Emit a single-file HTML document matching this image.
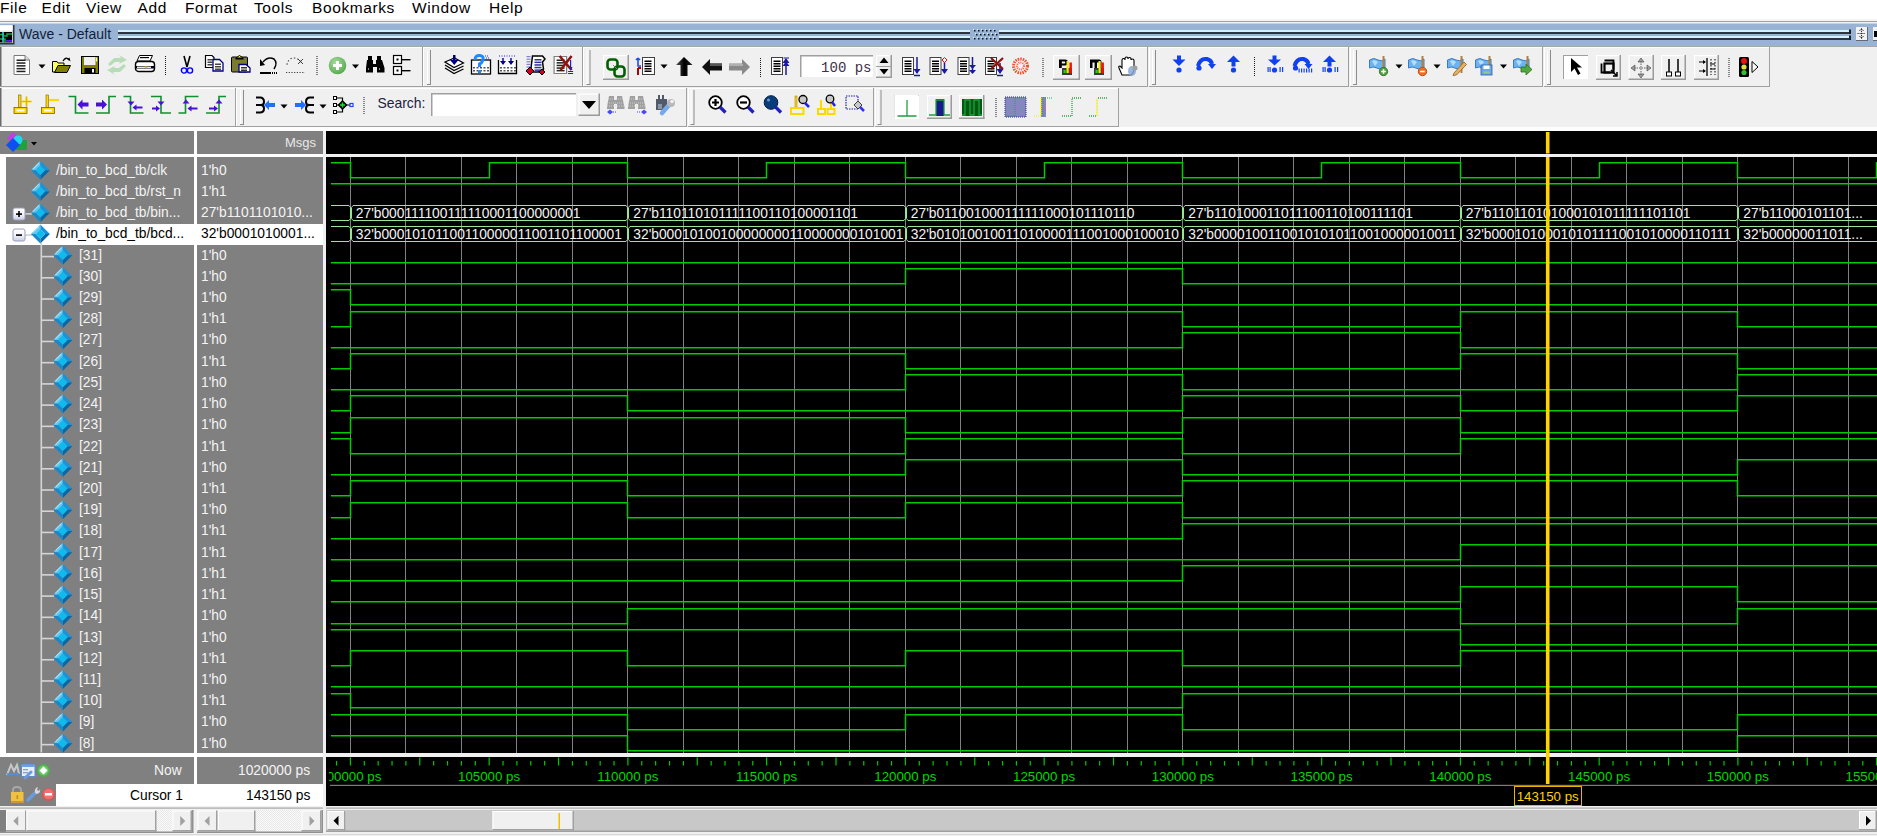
<!DOCTYPE html><html><head><meta charset="utf-8"><style>

*{margin:0;padding:0;box-sizing:border-box}
html,body{width:1877px;height:836px;overflow:hidden;background:#f0f0f0;font-family:"Liberation Sans",sans-serif}
.a{position:absolute}
.t{position:absolute;white-space:nowrap;line-height:1}

</style></head><body>
<div class="a" style="left:0;top:0;width:1877px;height:19px;background:#fff"></div>
<div class="a" style="left:0;top:19px;width:1877px;height:2px;background:#f4f4f4"></div>
<div class="a" style="left:0;top:21px;width:1877px;height:1px;background:#a0a0a0"></div>
<div class="a" style="left:0;top:22px;width:1877px;height:1px;background:#f0f0f0"></div>
<div class="t" style="left:0px;top:0px;font-size:15.5px;letter-spacing:0.6px;color:#000">File</div>
<div class="t" style="left:41.6px;top:0px;font-size:15.5px;letter-spacing:0.6px;color:#000">Edit</div>
<div class="t" style="left:86px;top:0px;font-size:15.5px;letter-spacing:0.6px;color:#000">View</div>
<div class="t" style="left:137.5px;top:0px;font-size:15.5px;letter-spacing:0.6px;color:#000">Add</div>
<div class="t" style="left:185px;top:0px;font-size:15.5px;letter-spacing:0.6px;color:#000">Format</div>
<div class="t" style="left:254px;top:0px;font-size:15.5px;letter-spacing:0.6px;color:#000">Tools</div>
<div class="t" style="left:312px;top:0px;font-size:15.5px;letter-spacing:0.6px;color:#000">Bookmarks</div>
<div class="t" style="left:412px;top:0px;font-size:15.5px;letter-spacing:0.6px;color:#000">Window</div>
<div class="t" style="left:489px;top:0px;font-size:15.5px;letter-spacing:0.6px;color:#000">Help</div>
<div class="a" style="left:0;top:23px;width:1877px;height:23px;background:#98b3d3"></div>
<div class="a" style="left:0;top:23px;width:1877px;height:1px;background:#c4d4e6"></div>
<div class="a" style="left:0;top:46px;width:1877px;height:1px;background:#a8a8a8"></div>
<div class="t" style="left:19px;top:27px;font-size:14px;color:#141e3c">Wave - Default</div>
<div class="a" style="left:118px;top:30px;width:852px;height:1.5px;background:#d2f2ff"></div>
<div class="a" style="left:118px;top:32px;width:852px;height:2px;background:#2c3540"></div>
<div class="a" style="left:118px;top:36px;width:852px;height:1.5px;background:#d2f2ff"></div>
<div class="a" style="left:118px;top:38px;width:852px;height:2px;background:#2c3540"></div>
<div class="a" style="left:999px;top:30px;width:851px;height:1.5px;background:#d2f2ff"></div>
<div class="a" style="left:999px;top:32px;width:851px;height:2px;background:#2c3540"></div>
<div class="a" style="left:999px;top:36px;width:851px;height:1.5px;background:#d2f2ff"></div>
<div class="a" style="left:999px;top:38px;width:851px;height:2px;background:#2c3540"></div>
<svg class="a" style="left:0;top:0" width="1877" height="50" viewBox="0 0 1877 50"><rect x="974" y="30" width="1.5" height="1.5" fill="#101820"/><rect x="973" y="29" width="1" height="1" fill="#e0f4ff"/><rect x="978" y="30" width="1.5" height="1.5" fill="#101820"/><rect x="977" y="29" width="1" height="1" fill="#e0f4ff"/><rect x="982" y="30" width="1.5" height="1.5" fill="#101820"/><rect x="981" y="29" width="1" height="1" fill="#e0f4ff"/><rect x="986" y="30" width="1.5" height="1.5" fill="#101820"/><rect x="985" y="29" width="1" height="1" fill="#e0f4ff"/><rect x="990" y="30" width="1.5" height="1.5" fill="#101820"/><rect x="989" y="29" width="1" height="1" fill="#e0f4ff"/><rect x="994" y="30" width="1.5" height="1.5" fill="#101820"/><rect x="993" y="29" width="1" height="1" fill="#e0f4ff"/><rect x="976" y="34" width="1.5" height="1.5" fill="#101820"/><rect x="975" y="33" width="1" height="1" fill="#e0f4ff"/><rect x="980" y="34" width="1.5" height="1.5" fill="#101820"/><rect x="979" y="33" width="1" height="1" fill="#e0f4ff"/><rect x="984" y="34" width="1.5" height="1.5" fill="#101820"/><rect x="983" y="33" width="1" height="1" fill="#e0f4ff"/><rect x="988" y="34" width="1.5" height="1.5" fill="#101820"/><rect x="987" y="33" width="1" height="1" fill="#e0f4ff"/><rect x="992" y="34" width="1.5" height="1.5" fill="#101820"/><rect x="991" y="33" width="1" height="1" fill="#e0f4ff"/><rect x="996" y="34" width="1.5" height="1.5" fill="#101820"/><rect x="995" y="33" width="1" height="1" fill="#e0f4ff"/><rect x="974" y="38" width="1.5" height="1.5" fill="#101820"/><rect x="973" y="37" width="1" height="1" fill="#e0f4ff"/><rect x="978" y="38" width="1.5" height="1.5" fill="#101820"/><rect x="977" y="37" width="1" height="1" fill="#e0f4ff"/><rect x="982" y="38" width="1.5" height="1.5" fill="#101820"/><rect x="981" y="37" width="1" height="1" fill="#e0f4ff"/><rect x="986" y="38" width="1.5" height="1.5" fill="#101820"/><rect x="985" y="37" width="1" height="1" fill="#e0f4ff"/><rect x="990" y="38" width="1.5" height="1.5" fill="#101820"/><rect x="989" y="37" width="1" height="1" fill="#e0f4ff"/><rect x="994" y="38" width="1.5" height="1.5" fill="#101820"/><rect x="993" y="37" width="1" height="1" fill="#e0f4ff"/></svg>
<svg class="a" style="left:0;top:0" width="1877" height="130" viewBox="0 0 1877 130"><rect x="0" y="47" width="423" height="1" fill="#ffffff"/><rect x="0" y="47" width="1" height="39" fill="#ffffff"/><rect x="422" y="47" width="1" height="40" fill="#a0a0a0"/><rect x="0" y="86" width="423" height="1" fill="#a0a0a0"/><rect x="423" y="47" width="160" height="1" fill="#ffffff"/><rect x="423" y="47" width="1" height="39" fill="#ffffff"/><rect x="582" y="47" width="1" height="40" fill="#a0a0a0"/><rect x="423" y="86" width="160" height="1" fill="#a0a0a0"/><rect x="583" y="47" width="565" height="1" fill="#ffffff"/><rect x="583" y="47" width="1" height="39" fill="#ffffff"/><rect x="1147" y="47" width="1" height="40" fill="#a0a0a0"/><rect x="583" y="86" width="565" height="1" fill="#a0a0a0"/><rect x="1149" y="47" width="200" height="1" fill="#ffffff"/><rect x="1149" y="47" width="1" height="39" fill="#ffffff"/><rect x="1348" y="47" width="1" height="40" fill="#a0a0a0"/><rect x="1149" y="86" width="200" height="1" fill="#a0a0a0"/><rect x="1350" y="47" width="193" height="1" fill="#ffffff"/><rect x="1350" y="47" width="1" height="39" fill="#ffffff"/><rect x="1542" y="47" width="1" height="40" fill="#a0a0a0"/><rect x="1350" y="86" width="193" height="1" fill="#a0a0a0"/><rect x="1544" y="47" width="226" height="1" fill="#ffffff"/><rect x="1544" y="47" width="1" height="39" fill="#ffffff"/><rect x="1769" y="47" width="1" height="40" fill="#a0a0a0"/><rect x="1544" y="86" width="226" height="1" fill="#a0a0a0"/><rect x="0" y="88" width="236" height="1" fill="#ffffff"/><rect x="0" y="88" width="1" height="38" fill="#ffffff"/><rect x="235" y="88" width="1" height="39" fill="#a0a0a0"/><rect x="0" y="126" width="236" height="1" fill="#a0a0a0"/><rect x="236" y="88" width="451" height="1" fill="#ffffff"/><rect x="236" y="88" width="1" height="38" fill="#ffffff"/><rect x="686" y="88" width="1" height="39" fill="#a0a0a0"/><rect x="236" y="126" width="451" height="1" fill="#a0a0a0"/><rect x="688" y="88" width="186" height="1" fill="#ffffff"/><rect x="688" y="88" width="1" height="38" fill="#ffffff"/><rect x="873" y="88" width="1" height="39" fill="#a0a0a0"/><rect x="688" y="126" width="186" height="1" fill="#a0a0a0"/><rect x="875" y="88" width="244" height="1" fill="#ffffff"/><rect x="875" y="88" width="1" height="38" fill="#ffffff"/><rect x="1118" y="88" width="1" height="39" fill="#a0a0a0"/><rect x="875" y="126" width="244" height="1" fill="#a0a0a0"/><rect x="0" y="47" width="1.5" height="39" fill="#6a6a6a"/><rect x="0" y="88" width="1.5" height="38" fill="#6a6a6a"/><rect x="427" y="50" width="1" height="34" fill="#ffffff"/><rect x="430" y="50" width="1" height="34" fill="#8c8c8c"/><rect x="427" y="84" width="4" height="1" fill="#8c8c8c"/><rect x="586.5" y="50" width="1" height="34" fill="#ffffff"/><rect x="589.5" y="50" width="1" height="34" fill="#8c8c8c"/><rect x="586.5" y="84" width="4" height="1" fill="#8c8c8c"/><rect x="1152" y="50" width="1" height="34" fill="#ffffff"/><rect x="1155" y="50" width="1" height="34" fill="#8c8c8c"/><rect x="1152" y="84" width="4" height="1" fill="#8c8c8c"/><rect x="1353" y="50" width="1" height="34" fill="#ffffff"/><rect x="1356" y="50" width="1" height="34" fill="#8c8c8c"/><rect x="1353" y="84" width="4" height="1" fill="#8c8c8c"/><rect x="1547" y="50" width="1" height="34" fill="#ffffff"/><rect x="1550" y="50" width="1" height="34" fill="#8c8c8c"/><rect x="1547" y="84" width="4" height="1" fill="#8c8c8c"/><rect x="240" y="90" width="1" height="34" fill="#ffffff"/><rect x="243" y="90" width="1" height="34" fill="#8c8c8c"/><rect x="240" y="124" width="4" height="1" fill="#8c8c8c"/><rect x="690.5" y="90" width="1" height="34" fill="#ffffff"/><rect x="693.5" y="90" width="1" height="34" fill="#8c8c8c"/><rect x="690.5" y="124" width="4" height="1" fill="#8c8c8c"/><rect x="877.5" y="90" width="1" height="34" fill="#ffffff"/><rect x="880.5" y="90" width="1" height="34" fill="#8c8c8c"/><rect x="877.5" y="124" width="4" height="1" fill="#8c8c8c"/><g transform="translate(13,55)"><path d="M1 0.5 H12 L16.5 5 V19.5 H1 Z" fill="#fff" stroke="#7a7a7a" stroke-width="1"/><path d="M12 0.5 V5 H16.5" fill="#ddd" stroke="#7a7a7a" stroke-width="1"/><rect x="3.5" y="4.5" width="9" height="1.5" fill="#222"/><rect x="3.5" y="7.3" width="9" height="1.5" fill="#222"/><rect x="3.5" y="10.1" width="9" height="1.5" fill="#222"/><rect x="3.5" y="12.899999999999999" width="9" height="1.5" fill="#222"/><rect x="3.5" y="15.7" width="9" height="1.5" fill="#222"/></g><path d="M38.5 64.5 h7 l-3.5 4 z" fill="#000"/><g transform="translate(52,57)"><path d="M0.5 4.5 H5 L6 6 H12 V15 H0.5 Z" fill="#ffff60" stroke="#000"/><path d="M2.5 15.5 L6 8.5 H18.5 L15 15.5 Z" fill="#808000" stroke="#000"/><path d="M11 4 Q14 -1 17 3" stroke="#000" stroke-width="1.3" fill="none"/><path d="M15.5 2 L18.5 4.5 L17.5 0.5 Z" fill="#000"/></g><g transform="translate(81,56)"><rect x="0.5" y="0.5" width="17" height="17" fill="#808000" stroke="#000"/><rect x="3" y="1" width="11.5" height="8" fill="#f0f0f0"/><rect x="15" y="1.5" width="1.2" height="4" fill="#ffff80"/><rect x="3.5" y="12" width="11" height="5.5" fill="#000"/><rect x="11" y="13" width="2" height="3.5" fill="#fff"/></g><g transform="translate(107,55)"><path d="M1 9 L7 3 H14 L12 0 L20 5 L12 9 L13 7 H8 L3 11 Z" fill="#b8dcb8"/><path d="M19 11 L13 17 H6 L8 20 L0 15 L8 11 L7 13 H12 L17 9 Z" fill="#b8dcb8"/></g><g transform="translate(135,55)"><path d="M4.5 0.5 H17.5 L15 6 H2 Z" fill="#fff" stroke="#000"/><rect x="5" y="2" width="9" height="1.2" fill="#000"/><rect x="0.5" y="6.5" width="19" height="10" rx="3" fill="#fff" stroke="#000" stroke-width="1.4"/><rect x="1" y="11" width="18" height="2.5" fill="#000"/><rect x="2" y="11.6" width="14" height="1.3" fill="#fff"/><rect x="9.5" y="11.6" width="3" height="1.3" fill="#e0d000"/></g><rect x="165" y="56" width="1" height="1" fill="#181818"/><rect x="165" y="58" width="1" height="1" fill="#181818"/><rect x="165" y="60" width="1" height="1" fill="#181818"/><rect x="165" y="62" width="1" height="1" fill="#181818"/><rect x="165" y="64" width="1" height="1" fill="#181818"/><rect x="165" y="66" width="1" height="1" fill="#181818"/><rect x="165" y="68" width="1" height="1" fill="#181818"/><rect x="165" y="70" width="1" height="1" fill="#181818"/><rect x="165" y="72" width="1" height="1" fill="#181818"/><rect x="165" y="74" width="1" height="1" fill="#181818"/><g transform="translate(181,56)"><path d="M3 0 L6 11 M9 0 L6 11" stroke="#000" stroke-width="1.6" fill="none"/><circle cx="3" cy="14.5" r="2.6" fill="none" stroke="#0000ff" stroke-width="1.4"/><circle cx="9" cy="14.5" r="2.6" fill="none" stroke="#0000ff" stroke-width="1.4"/></g><g transform="translate(205,55)"><path d="M0.5 0.5 H7 L9 2.5 V12.5 H0.5 Z" fill="#fff" stroke="#000" stroke-width="1.2"/><rect x="2.5" y="4.0" width="5" height="1.5" fill="#444"/><rect x="2.5" y="6.5" width="5" height="1.5" fill="#444"/><rect x="2.5" y="9.0" width="5" height="1.5" fill="#444"/><path d="M8 4.5 H14.5 L18 8 V16 H8 Z" fill="#fff" stroke="#000080" stroke-width="1.3"/><rect x="10" y="8.5" width="6" height="1.5" fill="#444"/><rect x="10" y="11.0" width="6" height="1.5" fill="#444"/><rect x="10" y="13.5" width="6" height="1.5" fill="#444"/></g><g transform="translate(231,55)"><rect x="0.5" y="2" width="16" height="15" rx="1" fill="#7a7a30" stroke="#000"/><path d="M5 3 L8.5 0.5 L12 3 Z" fill="#ffff00" stroke="#000"/><rect x="4.5" y="3" width="8" height="1.5" fill="#000"/><path d="M8 9.5 H15 L19 13 V17 H8 Z" fill="#fff" stroke="#000080" stroke-width="1.3"/><rect x="10" y="12.0" width="6" height="1.5" fill="#333"/><rect x="10" y="14.5" width="6" height="1.5" fill="#333"/></g><g transform="translate(259,56)"><path d="M4 6 Q9 0 15 3 Q19 7 15 13" stroke="#000" stroke-width="1.5" fill="none"/><path d="M1 3 L6 9 L1 10 Z" fill="#000"/><rect x="1" y="16" width="11" height="2" fill="#000"/><rect x="13" y="16" width="1" height="2" fill="#000"/><rect x="15" y="16" width="1" height="2" fill="#000"/><rect x="17" y="16" width="1" height="2" fill="#000"/></g><g transform="translate(286,56)"><path d="M15 6 Q10 0 4 3 Q1 6 1 9" stroke="#505050" stroke-width="1.2" stroke-dasharray="1.5 2" fill="none"/><path d="M12 3 L17 8 M17 3 L12 8" stroke="#404040" stroke-width="1"/><path d="M0 16.5 H19" stroke="#404040" stroke-width="1.2" stroke-dasharray="1.2 1.5"/></g><rect x="316.5" y="56" width="1" height="1" fill="#181818"/><rect x="316.5" y="58" width="1" height="1" fill="#181818"/><rect x="316.5" y="60" width="1" height="1" fill="#181818"/><rect x="316.5" y="62" width="1" height="1" fill="#181818"/><rect x="316.5" y="64" width="1" height="1" fill="#181818"/><rect x="316.5" y="66" width="1" height="1" fill="#181818"/><rect x="316.5" y="68" width="1" height="1" fill="#181818"/><rect x="316.5" y="70" width="1" height="1" fill="#181818"/><rect x="316.5" y="72" width="1" height="1" fill="#181818"/><rect x="316.5" y="74" width="1" height="1" fill="#181818"/><g transform="translate(328.5,56.5)"><defs><radialGradient id="gc" cx="40%" cy="35%" r="70%"><stop offset="0" stop-color="#a8dca0"/><stop offset="1" stop-color="#54a84c"/></radialGradient></defs><circle cx="9" cy="9" r="8.8" fill="url(#gc)"/><rect x="4.5" y="7.5" width="9" height="3" fill="#fff"/><rect x="7.5" y="4.5" width="3" height="9" fill="#fff"/></g><path d="M352 64.5 h7 l-3.5 4 z" fill="#000"/><g transform="translate(366,56)"><rect x="2" y="0" width="4" height="4" fill="#000"/><rect x="11" y="0" width="4" height="4" fill="#000"/><path d="M1 4 H7 V8 H10 V4 H16 L18.5 12 V16.5 H11 V11 H7 V16.5 H0 V12 Z" fill="#000"/><rect x="2" y="12" width="1" height="2" fill="#888"/><rect x="13" y="12" width="1" height="2" fill="#888"/></g><g transform="translate(393,55)"><rect x="0.5" y="0.5" width="8" height="8" fill="#fff" stroke="#000" stroke-width="1.2"/><rect x="3.5" y="3.5" width="2" height="2" fill="#000"/><rect x="8.5" y="4" width="9" height="1.4" fill="#000"/><rect x="0.5" y="11.5" width="8" height="8" fill="#fff" stroke="#000" stroke-width="1.2"/><rect x="3.5" y="14.5" width="2" height="2" fill="#000"/><rect x="8.5" y="15" width="9" height="1.4" fill="#000"/></g><g transform="translate(444.5,55)"><path d="M0.5 7 L10 3 L19 8 L9.5 12.5 Z" fill="#fff" stroke="#000" stroke-width="1.2"/><path d="M0.5 10 L9.5 15.5 L19 11" fill="none" stroke="#000" stroke-width="1.2"/><path d="M0.5 13 L9.5 18.5 L19 14" fill="none" stroke="#000" stroke-width="1.2"/><rect x="8.5" y="0" width="2.5" height="6" fill="#000080"/><path d="M5.5 5 H14 L9.75 10 Z" fill="#000080"/></g><g transform="translate(471,55)"><rect x="0.5" y="5" width="19" height="14" fill="#fff" stroke="#000" stroke-width="1.3"/><rect x="2.0" y="12" width="2" height="1.5" fill="#555"/><rect x="2.0" y="15" width="2" height="1.5" fill="#555"/><rect x="5.5" y="12" width="2" height="1.5" fill="#555"/><rect x="5.5" y="15" width="2" height="1.5" fill="#555"/><rect x="9.0" y="12" width="2" height="1.5" fill="#555"/><rect x="9.0" y="15" width="2" height="1.5" fill="#555"/><rect x="12.5" y="12" width="2" height="1.5" fill="#555"/><rect x="12.5" y="15" width="2" height="1.5" fill="#555"/><rect x="16.0" y="12" width="2" height="1.5" fill="#555"/><rect x="16.0" y="15" width="2" height="1.5" fill="#555"/><path d="M4 5 Q4 0 9 0.5 Q13 1 12 5 Q11 8 8.5 9 V12" stroke="#1e8cff" stroke-width="3" fill="none"/><rect x="7" y="15" width="3" height="3" fill="#1e8cff"/><path d="M14 1 h4 M15 3 h3" stroke="#3030c0" stroke-width="1" stroke-dasharray="1 1"/></g><g transform="translate(498,55)"><path d="M0.5 5 V18.5 H18.5 V5" fill="#fff" stroke="#000" stroke-width="1.3"/><rect x="2.0" y="12" width="2" height="1.5" fill="#555"/><rect x="2.0" y="15" width="2" height="1.5" fill="#555"/><rect x="5.5" y="12" width="2" height="1.5" fill="#555"/><rect x="5.5" y="15" width="2" height="1.5" fill="#555"/><rect x="9.0" y="12" width="2" height="1.5" fill="#555"/><rect x="9.0" y="15" width="2" height="1.5" fill="#555"/><rect x="12.5" y="12" width="2" height="1.5" fill="#555"/><rect x="12.5" y="15" width="2" height="1.5" fill="#555"/><rect x="16.0" y="12" width="2" height="1.5" fill="#555"/><rect x="16.0" y="15" width="2" height="1.5" fill="#555"/><path d="M1 1 h17" stroke="#2828c8" stroke-width="1.2" stroke-dasharray="1 1.5"/><path d="M5 3 V6 M13 3 V6" stroke="#2020a0" stroke-width="1.6"/><path d="M2 6 H8 L5 10 Z M10 6 H16 L13 10 Z" fill="#000090"/></g><g transform="translate(525.5,55)"><path d="M7 1 H17 L19.5 4 L17 7 L18 14 L13 17 H5 Z" fill="#fff" stroke="#000" stroke-width="1.5"/><rect x="9" y="4.0" width="7" height="1.5" fill="#3030a0"/><rect x="9" y="6.6" width="7" height="1.5" fill="#3030a0"/><rect x="9" y="9.2" width="7" height="1.5" fill="#3030a0"/><rect x="9" y="11.8" width="7" height="1.5" fill="#3030a0"/><rect x="9" y="14.4" width="7" height="1.5" fill="#3030a0"/><rect x="1" y="1.0" width="4" height="1.2" fill="#8080d0"/><rect x="1" y="3.6" width="4" height="1.2" fill="#8080d0"/><rect x="1" y="6.2" width="4" height="1.2" fill="#8080d0"/><rect x="1" y="8.8" width="4" height="1.2" fill="#8080d0"/><rect x="1" y="11.4" width="4" height="1.2" fill="#8080d0"/><rect x="1" y="14.0" width="4" height="1.2" fill="#8080d0"/><path d="M4.5 12 L8.5 16 L4.5 20 L0.5 16 Z" fill="#d00020" stroke="#000"/><path d="M16.5 14 L19.5 17 L16.5 20 L13.5 17 Z" fill="#d00020" stroke="#000"/></g><g transform="translate(553.6,55)"><path d="M0.5 1.5 H13 V18.5 H0.5 Z" fill="#fff" stroke="#808080" stroke-width="1.2"/><rect x="3" y="4.5" width="8" height="1.5" fill="#222"/><rect x="3" y="7.1" width="8" height="1.5" fill="#222"/><rect x="3" y="9.7" width="8" height="1.5" fill="#222"/><rect x="3" y="12.3" width="8" height="1.5" fill="#222"/><rect x="3" y="14.9" width="8" height="1.5" fill="#222"/><path d="M6 1 L18 15 M18 1 L7 15" stroke="#901010" stroke-width="2.5"/><path d="M17 5 V15 M14.5 16.5 h5 M14.5 18.5 h5" stroke="#2020c0" stroke-width="1.2"/><path d="M15 12 H19 L17 15 Z" fill="#2020c0"/></g><rect x="603" y="55" width="26" height="25" fill="#f0f0f0"/><rect x="603" y="55" width="26" height="1.2" fill="#fff"/><rect x="603" y="55" width="1.2" height="25" fill="#fff"/><rect x="627.5" y="55" width="1.5" height="25" fill="#9a9a9a"/><rect x="603" y="78.5" width="26" height="1.5" fill="#9a9a9a"/><g transform="translate(606,58)"><rect x="1.5" y="1.5" width="10" height="10" rx="3" fill="none" stroke="#006000" stroke-width="2.6"/><rect x="8.5" y="8.5" width="10" height="10" rx="3" fill="none" stroke="#006000" stroke-width="2.6"/><path d="M7 7 L12 12" stroke="#808080" stroke-width="1"/></g><g transform="translate(635,57)"><path d="M3 1 V9 H6 M3 1 l-2 2 M3 1 l2 2" stroke="#2050e0" stroke-width="1.6" fill="none"/><path d="M3 11 V18 M3 11 H6" stroke="#b00000" stroke-width="2" fill="none"/><rect x="7.5" y="0.5" width="12" height="17" fill="#fff" stroke="#404040" stroke-width="1"/><rect x="9.5" y="3.5" width="7" height="1.5" fill="#000"/><rect x="9.5" y="6.0" width="7" height="1.5" fill="#000"/><rect x="9.5" y="8.5" width="7" height="1.5" fill="#000"/><rect x="9.5" y="11.0" width="7" height="1.5" fill="#000"/><rect x="9.5" y="13.5" width="7" height="1.5" fill="#000"/></g><path d="M660.5 64.5 h7 l-3.5 4 z" fill="#000"/><g transform="translate(676,57)"><defs><linearGradient id="ga" x1="0" x2="1"><stop offset="0" stop-color="#555"/><stop offset="0.5" stop-color="#000"/><stop offset="1" stop-color="#222"/></linearGradient></defs><path d="M8 0 L16.5 8 H11.5 V19 H4.5 V8 H0 Z" fill="url(#ga)"/></g><g transform="translate(702,59)"><path d="M0 8 L8 0 V4.5 H20 V11.5 H8 V16 Z" fill="#101010"/><path d="M8 4.5 H20 V7 H8 Z" fill="#555"/></g><g transform="translate(729,59)"><path d="M21 8 L13 0 V4.5 H0 V11.5 H13 V16 Z" fill="#8a8a8a"/><path d="M0 5 H14 V7 H0 Z" fill="#b0b0b0"/></g><rect x="760" y="58" width="1" height="1" fill="#181818"/><rect x="760" y="60" width="1" height="1" fill="#181818"/><rect x="760" y="62" width="1" height="1" fill="#181818"/><rect x="760" y="64" width="1" height="1" fill="#181818"/><rect x="760" y="66" width="1" height="1" fill="#181818"/><rect x="760" y="68" width="1" height="1" fill="#181818"/><rect x="760" y="70" width="1" height="1" fill="#181818"/><rect x="760" y="72" width="1" height="1" fill="#181818"/><rect x="760" y="74" width="1" height="1" fill="#181818"/><rect x="760" y="76" width="1" height="1" fill="#181818"/><g transform="translate(771,57)"><rect x="0.5" y="0.5" width="11" height="17" fill="#fff" stroke="#404040"/><rect x="2.5" y="3.5" width="7" height="1.5" fill="#000"/><rect x="2.5" y="6.0" width="7" height="1.5" fill="#000"/><rect x="2.5" y="8.5" width="7" height="1.5" fill="#000"/><rect x="2.5" y="11.0" width="7" height="1.5" fill="#000"/><rect x="2.5" y="13.5" width="7" height="1.5" fill="#000"/><path d="M15 18 V2" stroke="#1a1aa0" stroke-width="1.5"/><path d="M11.5 6 L15 1 L18.5 6 Z M11.5 9 L15 4.5 L18.5 9" fill="#1a1aa0"/><path d="M12.5 1 H18" stroke="#1a1aa0"/></g><rect x="800" y="55" width="73" height="23" fill="#fff"/><rect x="800" y="55" width="73" height="1.5" fill="#a0a0a0"/><rect x="800" y="55" width="1.5" height="23" fill="#a0a0a0"/><rect x="800" y="77" width="73" height="1" fill="#f0f0f0"/><text x="871.5" y="72" text-anchor="end" font-family="Liberation Mono" font-size="14" fill="#40304a">100 ps</text><rect x="876" y="55" width="16" height="23" fill="#f0f0f0"/><rect x="876" y="55" width="16" height="1.2" fill="#fff"/><rect x="876" y="55" width="1.2" height="23" fill="#fff"/><rect x="890.5" y="55" width="1.5" height="23" fill="#9a9a9a"/><rect x="876" y="76.5" width="16" height="1.5" fill="#9a9a9a"/><rect x="876" y="66" width="16" height="1" fill="#a0a0a0"/><path d="M879.5 63 L884 57.5 L888.5 63 Z M879.5 69 L884 74.5 L888.5 69 Z" fill="#000"/><g transform="translate(902,57)"><rect x="0.5" y="0.5" width="11" height="17" fill="#fff" stroke="#404040"/><rect x="2.5" y="3.5" width="7" height="1.5" fill="#000"/><rect x="2.5" y="6.0" width="7" height="1.5" fill="#000"/><rect x="2.5" y="8.5" width="7" height="1.5" fill="#000"/><rect x="2.5" y="11.0" width="7" height="1.5" fill="#000"/><rect x="2.5" y="13.5" width="7" height="1.5" fill="#000"/><path d="M15 0 V16" stroke="#1a1aa0" stroke-width="1.5"/><path d="M11.5 12 H18.5 L15 17 Z" fill="#1a1aa0"/><path d="M12 18.5 H18" stroke="#1a1aa0" stroke-width="1.5"/></g><g transform="translate(929.5,57)"><rect x="0.5" y="0.5" width="11" height="17" fill="#fff" stroke="#404040"/><rect x="2.5" y="3.5" width="7" height="1.5" fill="#000"/><rect x="2.5" y="6.0" width="7" height="1.5" fill="#000"/><rect x="2.5" y="8.5" width="7" height="1.5" fill="#000"/><rect x="2.5" y="11.0" width="7" height="1.5" fill="#000"/><rect x="2.5" y="13.5" width="7" height="1.5" fill="#000"/><path d="M15 5 V16" stroke="#1a1aa0" stroke-width="1.5"/><path d="M11.5 12 H18.5 L15 17 Z" fill="#1a1aa0"/><path d="M15 0.5 L17.5 3 L15 5.5 L12.5 3 Z" fill="#fff" stroke="#e01010"/></g><g transform="translate(957.5,57)"><rect x="0.5" y="0.5" width="11" height="17" fill="#fff" stroke="#404040"/><rect x="2.5" y="3.5" width="7" height="1.5" fill="#000"/><rect x="2.5" y="6.0" width="7" height="1.5" fill="#000"/><rect x="2.5" y="8.5" width="7" height="1.5" fill="#000"/><rect x="2.5" y="11.0" width="7" height="1.5" fill="#000"/><rect x="2.5" y="13.5" width="7" height="1.5" fill="#000"/><path d="M15 0 V16" stroke="#1a1aa0" stroke-width="1.5"/><path d="M11.5 8 H18.5 L15 12 Z M11.5 13 H18.5 L15 17 Z" fill="#1a1aa0"/></g><g transform="translate(985,57)"><rect x="0.5" y="0.5" width="11" height="17" fill="#fff" stroke="#404040"/><rect x="2.5" y="3.5" width="7" height="1.5" fill="#000"/><rect x="2.5" y="6.0" width="7" height="1.5" fill="#000"/><rect x="2.5" y="8.5" width="7" height="1.5" fill="#000"/><rect x="2.5" y="11.0" width="7" height="1.5" fill="#000"/><rect x="2.5" y="13.5" width="7" height="1.5" fill="#000"/><path d="M15 6 V16" stroke="#1a1aa0" stroke-width="1.5"/><path d="M11.5 12 H18.5 L15 17 Z" fill="#1a1aa0"/><path d="M12 18.5 H18" stroke="#1a1aa0" stroke-width="1.5"/><path d="M6 1 L18 12 M18 1 L6 12" stroke="#901010" stroke-width="2.2"/></g><g transform="translate(1012,57)"><circle cx="8.5" cy="9" r="7" fill="none" stroke="#f05030" stroke-width="3" stroke-dasharray="1.5 1"/><circle cx="8.5" cy="9" r="3.5" fill="none" stroke="#f06040" stroke-width="2" stroke-dasharray="1 1"/></g><rect x="1042.5" y="58" width="1" height="1" fill="#181818"/><rect x="1042.5" y="60" width="1" height="1" fill="#181818"/><rect x="1042.5" y="62" width="1" height="1" fill="#181818"/><rect x="1042.5" y="64" width="1" height="1" fill="#181818"/><rect x="1042.5" y="66" width="1" height="1" fill="#181818"/><rect x="1042.5" y="68" width="1" height="1" fill="#181818"/><rect x="1042.5" y="70" width="1" height="1" fill="#181818"/><rect x="1042.5" y="72" width="1" height="1" fill="#181818"/><rect x="1042.5" y="74" width="1" height="1" fill="#181818"/><rect x="1042.5" y="76" width="1" height="1" fill="#181818"/><rect x="1053" y="55" width="27" height="25" fill="#f0f0f0"/><rect x="1053" y="55" width="27" height="1.2" fill="#fff"/><rect x="1053" y="55" width="1.2" height="25" fill="#fff"/><rect x="1078.5" y="55" width="1.5" height="25" fill="#9a9a9a"/><rect x="1053" y="78.5" width="27" height="1.5" fill="#9a9a9a"/><g transform="translate(1057,58)"><path d="M2 1.5 H8 Q11 1.5 11 4.5 Q11 7.5 8 7.5 H4.8 V10 H2 Z M4.8 3.5 V5.5 H7.5 Q8.3 5.5 8.3 4.5 Q8.3 3.5 7.5 3.5 Z" fill="#000"/><rect x="5" y="10" width="10" height="7" fill="#3a3a3a"/><rect x="6.5" y="12" width="2.2" height="3" fill="#10e010"/><rect x="9.5" y="3" width="2.2" height="12" fill="#f0f000"/><rect x="12.5" y="4.5" width="2.4" height="10.5" fill="#f01010"/><rect x="5" y="15.5" width="10" height="1.5" fill="#3a3a3a"/></g><rect x="1085" y="55" width="27" height="25" fill="#f0f0f0"/><rect x="1085" y="55" width="27" height="1.2" fill="#fff"/><rect x="1085" y="55" width="1.2" height="25" fill="#fff"/><rect x="1110.5" y="55" width="1.5" height="25" fill="#9a9a9a"/><rect x="1085" y="78.5" width="27" height="1.5" fill="#9a9a9a"/><g transform="translate(1089,58)"><path d="M1 1.5 H10 Q12.5 1.5 12.5 4 V10 H10 V4.5 H8 V10 H5.6 V4.5 H3.5 V10 H1 Z" fill="#000"/><rect x="5" y="10" width="10" height="7" fill="#3a3a3a"/><rect x="6.5" y="12" width="2.2" height="3" fill="#10e010"/><rect x="9.5" y="3" width="2.2" height="12" fill="#f0f000"/><rect x="12.5" y="4.5" width="2.4" height="10.5" fill="#f01010"/><rect x="5" y="15.5" width="10" height="1.5" fill="#3a3a3a"/></g><g transform="translate(1118,57)"><path d="M4 18 L1 11 Q0 9 2 9 L4 11 V3 Q4 1.5 5.5 1.5 Q7 1.5 7 3 V1.5 Q7 0 8.5 0 Q10 0 10 1.5 V2 Q10 0.5 11.5 0.5 Q13 0.5 13 2 V3 Q13 2 14.5 2 Q16 2 16 3.5 V12 Q16 16 13 18 Z" fill="#fff" stroke="#000" stroke-width="1.1"/><ellipse cx="14" cy="14" rx="4" ry="5" fill="#8aa8d8" opacity="0.85"/><circle cx="17" cy="11" r="2.5" fill="#a0a0a0"/></g><g transform="translate(1172,55.5)"><rect x="5" y="0" width="4" height="5" fill="#1040f0"/><path d="M0.5 4 H13.5 L7 10.5 Z" fill="#1040f0"/><circle cx="7" cy="14.5" r="2.6" fill="#1040f0"/></g><g transform="translate(1196,56)"><path d="M2 10 Q4 2 11 3 Q15 4 16 8" stroke="#1040f0" stroke-width="4" fill="none"/><path d="M12 8 H20 L16 13 Z" fill="#1040f0"/><circle cx="3" cy="12" r="2.6" fill="#1040f0"/></g><g transform="translate(1226.5,55.5)"><path d="M7 0 L13.5 6.5 H0.5 Z" fill="#1040f0"/><rect x="5" y="6" width="4" height="5" fill="#1040f0"/><circle cx="7" cy="14.5" r="2.6" fill="#1040f0"/></g><rect x="1254" y="57" width="1" height="1" fill="#181818"/><rect x="1254" y="59" width="1" height="1" fill="#181818"/><rect x="1254" y="61" width="1" height="1" fill="#181818"/><rect x="1254" y="63" width="1" height="1" fill="#181818"/><rect x="1254" y="65" width="1" height="1" fill="#181818"/><rect x="1254" y="67" width="1" height="1" fill="#181818"/><rect x="1254" y="69" width="1" height="1" fill="#181818"/><rect x="1254" y="71" width="1" height="1" fill="#181818"/><rect x="1254" y="73" width="1" height="1" fill="#181818"/><rect x="1254" y="75" width="1" height="1" fill="#181818"/><g transform="translate(1267.5,55.5)"><rect x="5" y="0" width="4" height="5" fill="#1040f0"/><path d="M0.5 4 H13.5 L7 10 Z" fill="#1040f0"/><circle cx="7" cy="14.5" r="2.6" fill="#1040f0"/><rect x="0" y="11.5" width="1.2" height="5" fill="#1040f0"/><rect x="2" y="11.5" width="1.2" height="5" fill="#1040f0"/><rect x="12" y="11.5" width="1.2" height="5" fill="#1040f0"/><rect x="14.5" y="11.5" width="1.2" height="5" fill="#1040f0"/></g><g transform="translate(1292.5,56)"><path d="M2 10 Q4 2 11 3 Q15 4 16 8" stroke="#1040f0" stroke-width="4" fill="none"/><path d="M12 8 H20 L16 13 Z" fill="#1040f0"/><circle cx="3" cy="12" r="2.6" fill="#1040f0"/><rect x="6" y="12.5" width="1.2" height="4" fill="#1040f0"/><rect x="8.5" y="12.5" width="1.2" height="4" fill="#1040f0"/><rect x="11" y="12.5" width="1.2" height="4" fill="#1040f0"/><rect x="13.5" y="12.5" width="1.2" height="4" fill="#1040f0"/><rect x="16" y="12.5" width="1.2" height="4" fill="#1040f0"/><rect x="18.5" y="12.5" width="1.2" height="4" fill="#1040f0"/></g><g transform="translate(1322.5,55.5)"><path d="M7 0 L13.5 6.5 H0.5 Z" fill="#1040f0"/><rect x="5" y="6" width="4" height="5" fill="#1040f0"/><circle cx="7" cy="14.5" r="2.6" fill="#1040f0"/><rect x="0" y="11.5" width="1.2" height="5" fill="#1040f0"/><rect x="2" y="11.5" width="1.2" height="5" fill="#1040f0"/><rect x="12" y="11.5" width="1.2" height="5" fill="#1040f0"/><rect x="14.5" y="11.5" width="1.2" height="5" fill="#1040f0"/></g><g transform="translate(1369,56)"><path d="M0.5 4 Q5 1 9 4 Q13 6 16 3 V12 Q12 15 8 12 Q4 10 0.5 12 Z" fill="#6cb4f0" stroke="#3a7ac8" stroke-width="1"/><path d="M3 5 Q6 3 9 6 L6 10 Z" fill="#c8e8ff" opacity="0.8"/><rect x="13.5" y="0" width="2" height="17" fill="#b08040"/><circle cx="14.5" cy="15.5" r="4.2" fill="#50a040" stroke="#2a7020" stroke-width="0.8"/><path d="M12.2 15.5 H16.8 M14.5 13.2 V17.8" stroke="#fff" stroke-width="1.5"/></g><path d="M1395.5 64.5 h7 l-3.5 4 z" fill="#000"/><g transform="translate(1408,56)"><path d="M0.5 4 Q5 1 9 4 Q13 6 16 3 V12 Q12 15 8 12 Q4 10 0.5 12 Z" fill="#6cb4f0" stroke="#3a7ac8" stroke-width="1"/><path d="M3 5 Q6 3 9 6 L6 10 Z" fill="#c8e8ff" opacity="0.8"/><rect x="13.5" y="0" width="2" height="17" fill="#b08040"/><circle cx="14.5" cy="15.5" r="4.2" fill="#f07020" stroke="#b04010" stroke-width="0.8"/><path d="M12.2 15.5 H16.8" stroke="#fff" stroke-width="1.5"/></g><path d="M1433.5 64.5 h7 l-3.5 4 z" fill="#000"/><g transform="translate(1447,56)"><path d="M0.5 4 Q5 1 9 4 Q13 6 16 3 V12 Q12 15 8 12 Q4 10 0.5 12 Z" fill="#6cb4f0" stroke="#3a7ac8" stroke-width="1"/><path d="M3 5 Q6 3 9 6 L6 10 Z" fill="#c8e8ff" opacity="0.8"/><rect x="13.5" y="0" width="2" height="17" fill="#b08040"/><path d="M7 17 L17 6 L19.5 8.5 L9.5 19 L6 19.5 Z" fill="#e8b060" stroke="#906020" stroke-width="0.8"/></g><g transform="translate(1475,56)"><path d="M0.5 4 Q5 1 9 4 Q13 6 16 3 V12 Q12 15 8 12 Q4 10 0.5 12 Z" fill="#6cb4f0" stroke="#3a7ac8" stroke-width="1"/><path d="M3 5 Q6 3 9 6 L6 10 Z" fill="#c8e8ff" opacity="0.8"/><rect x="13.5" y="0" width="2" height="17" fill="#b08040"/><rect x="6" y="9" width="11" height="10" fill="#6ca8e8" stroke="#2a5aa8" stroke-width="0.8"/><rect x="8.5" y="9.5" width="6" height="3.5" fill="#fff"/><rect x="8.5" y="15.5" width="6" height="2" fill="#90c890"/></g><path d="M1500 64.5 h7 l-3.5 4 z" fill="#000"/><g transform="translate(1513,56)"><path d="M0.5 4 Q5 1 9 4 Q13 6 16 3 V12 Q12 15 8 12 Q4 10 0.5 12 Z" fill="#6cb4f0" stroke="#3a7ac8" stroke-width="1"/><path d="M3 5 Q6 3 9 6 L6 10 Z" fill="#c8e8ff" opacity="0.8"/><rect x="13.5" y="0" width="2" height="17" fill="#b08040"/><path d="M8 11 H13 V8 L19 13.5 L13 19 V16 H8 Z" fill="#50a840" stroke="#2a7020" stroke-width="0.8"/></g><rect x="1563" y="55" width="25" height="24" fill="#fff"/><rect x="1563" y="55" width="25" height="1" fill="#a0a0a0"/><rect x="1563" y="55" width="1" height="24" fill="#a0a0a0"/><g transform="translate(1570,58)"><path d="M1 0 V14 L4.5 10.5 L8 17 L10.5 15.5 L7 9.5 H12 Z" fill="#000"/></g><rect x="1596" y="55" width="25" height="25" fill="#f0f0f0"/><rect x="1596" y="55" width="25" height="1.2" fill="#fff"/><rect x="1596" y="55" width="1.2" height="25" fill="#fff"/><rect x="1619.5" y="55" width="1.5" height="25" fill="#9a9a9a"/><rect x="1596" y="78.5" width="25" height="1.5" fill="#9a9a9a"/><g transform="translate(1599,58)"><path d="M5.5 2.5 H14.5 V11.5 M2.5 5.5 V14.5 H11.5" stroke="#000" stroke-width="1.8" fill="none"/><rect x="5.5" y="5.5" width="9" height="9" fill="none" stroke="#000" stroke-width="2.2"/><path d="M12 12 L18 18 M18 14 V18 H14" stroke="#000" stroke-width="1.5" fill="none"/></g><rect x="1628.5" y="55" width="25.5" height="25" fill="#f0f0f0"/><rect x="1628.5" y="55" width="25.5" height="1.2" fill="#fff"/><rect x="1628.5" y="55" width="1.2" height="25" fill="#fff"/><rect x="1652.5" y="55" width="1.5" height="25" fill="#9a9a9a"/><rect x="1628.5" y="78.5" width="25.5" height="1.5" fill="#9a9a9a"/><g transform="translate(1631,58)"><path d="M10 0 L13 4 H7 Z M10 20 L13 16 H7 Z M0 10 L4 7 V13 Z M20 10 L16 7 V13 Z" fill="#a0a0a0" stroke="#404040" stroke-width="0.6"/><path d="M10 3 V17 M3 10 H17" stroke="#606060" stroke-width="1" stroke-dasharray="1.5 1"/></g><rect x="1661" y="55" width="25" height="25" fill="#f0f0f0"/><rect x="1661" y="55" width="25" height="1.2" fill="#fff"/><rect x="1661" y="55" width="1.2" height="25" fill="#fff"/><rect x="1684.5" y="55" width="1.5" height="25" fill="#9a9a9a"/><rect x="1661" y="78.5" width="25" height="1.5" fill="#9a9a9a"/><g transform="translate(1664,59)"><path d="M5 0 V13 M14 0 V13" stroke="#000" stroke-width="1.5"/><rect x="2.5" y="13" width="5" height="4" fill="#fff" stroke="#000"/><rect x="11.5" y="13" width="5" height="4" fill="#fff" stroke="#000"/></g><rect x="1694" y="55" width="25" height="25" fill="#f0f0f0"/><rect x="1694" y="55" width="25" height="1.2" fill="#fff"/><rect x="1694" y="55" width="1.2" height="25" fill="#fff"/><rect x="1717.5" y="55" width="1.5" height="25" fill="#9a9a9a"/><rect x="1694" y="78.5" width="25" height="1.5" fill="#9a9a9a"/><g transform="translate(1697,58)"><path d="M2 4 H8 M2 13 H8" stroke="#000" stroke-width="1.2"/><path d="M6 2 L9 4 L6 6 Z M6 11 L9 13 L6 15 Z" fill="#000"/><path d="M10 0 V18" stroke="#000" stroke-width="1.3"/><path d="M14 1 V17 M18 1 V17" stroke="#000" stroke-dasharray="1.5 1.5"/><path d="M13 6 h5 M13 11 h5" stroke="#000"/></g><rect x="1728.5" y="58" width="1" height="1" fill="#181818"/><rect x="1728.5" y="60" width="1" height="1" fill="#181818"/><rect x="1728.5" y="62" width="1" height="1" fill="#181818"/><rect x="1728.5" y="64" width="1" height="1" fill="#181818"/><rect x="1728.5" y="66" width="1" height="1" fill="#181818"/><rect x="1728.5" y="68" width="1" height="1" fill="#181818"/><rect x="1728.5" y="70" width="1" height="1" fill="#181818"/><rect x="1728.5" y="72" width="1" height="1" fill="#181818"/><rect x="1728.5" y="74" width="1" height="1" fill="#181818"/><rect x="1728.5" y="76" width="1" height="1" fill="#181818"/><g transform="translate(1739,57)"><rect x="0" y="0" width="10" height="20" rx="1.5" fill="#000"/><circle cx="5" cy="4" r="3" fill="#f01010"/><circle cx="5" cy="10" r="2.6" fill="#e0e040"/><circle cx="5" cy="15.5" r="2.6" fill="#30c030"/><path d="M13 4.5 L19 10 L13 15.5 Z" fill="#fff" stroke="#000" stroke-width="1"/></g><g transform="translate(13.5,95)"><rect x="5" y="0" width="2.5" height="13" fill="#ffd800" stroke="#806000" stroke-width="0.6"/><rect x="0.5" y="12.5" width="13" height="6" fill="#ffd800" stroke="#806000" stroke-width="0.8"/><rect x="3" y="14.5" width="8" height="2" fill="#fff"/><path d="M8 6.5 H18 M13 1.5 V11.5" stroke="#ffd800" stroke-width="2.2"/><path d="M8 6.5 H18 M13 1.5 V11.5" stroke="#806000" stroke-width="0.5" opacity="0.5"/></g><g transform="translate(41,95)"><rect x="5" y="0" width="2.5" height="13" fill="#ffd800" stroke="#806000" stroke-width="0.6"/><rect x="0.5" y="12.5" width="13" height="6" fill="#ffd800" stroke="#806000" stroke-width="0.8"/><rect x="3" y="14.5" width="8" height="2" fill="#fff"/><path d="M8 5 H18" stroke="#ffd800" stroke-width="2.2"/></g><g transform="translate(68.5,95.5)"><path d="M0 1 H7 V17.5 H20" stroke="#109030" stroke-width="1.6" fill="none"/><path d="M9 9 L14 4 V7 H20 V11 H14 V14 Z" fill="#4a10d8"/></g><g transform="translate(96,95.5)"><path d="M0 17.5 H13 V1 H20" stroke="#109030" stroke-width="1.6" fill="none"/><path d="M11 9 L6 4 V7 H0 V11 H6 V14 Z" fill="#4a10d8"/></g><g transform="translate(123.5,95.5)"><path d="M0 1 H7 V17.5 H20" stroke="#109030" stroke-width="1.6" fill="none"/><path d="M4 6 H11 L7.5 10 Z" fill="#4a10d8"/><path d="M9 12 L13 9 V11 H19 V13 H13 V15 Z" fill="#4a10d8"/></g><g transform="translate(151,95.5)"><path d="M0 1 H10 V17.5 H20" stroke="#109030" stroke-width="1.6" fill="none"/><path d="M6.5 6 H13.5 L10 10 Z" fill="#4a10d8"/><path d="M9 13 L5 10 V12 H1 V14 H5 V16 Z" fill="#4a10d8"/></g><g transform="translate(178.5,95.5)"><path d="M0 17.5 H7 V1 H20" stroke="#109030" stroke-width="1.6" fill="none"/><path d="M4 8 H11 L7.5 4 Z" fill="#4a10d8"/><path d="M9 13 L13 10 V12 H19 V14 H13 V16 Z" fill="#4a10d8"/></g><g transform="translate(206,95.5)"><path d="M0 17.5 H13 V1 H20" stroke="#109030" stroke-width="1.6" fill="none"/><path d="M9.5 8 H16.5 L13 4 Z" fill="#4a10d8"/><path d="M12 13 L8 10 V12 H3 V14 H8 V16 Z" fill="#4a10d8"/></g><g transform="translate(256,96)"><path d="M0 1.5 H4 Q8 1.5 8 6 Q8 9 5 9 H0 M5 9 Q8 9 8 12.5 Q8 16.5 4 16.5 H0" stroke="#000" stroke-width="2" fill="none"/><path d="M8 9 L13 4 V7 H19 V11 H13 V14 Z" fill="#1e70ff"/></g><path d="M280.5 104.5 h7 l-3.5 4 z" fill="#000"/><g transform="translate(295,96)"><path d="M19 1.5 H15 Q11 1.5 11 6 Q11 9 14 9 H19 M14 9 Q11 9 11 12.5 Q11 16.5 15 16.5 H19" stroke="#000" stroke-width="2" fill="none"/><path d="M11 9 L6 4 V7 H0 V11 H6 V14 Z" fill="#1e70ff"/></g><path d="M319.5 104.5 h7 l-3.5 4 z" fill="#000"/><g transform="translate(333.5,96)"><path d="M2 2 H9 V9 M2 9 H9 M2 16 H9 V9 M9 9 H17" stroke="#000" stroke-width="1.2" fill="none"/><rect x="0" y="0.5" width="3" height="3" fill="#fff" stroke="#000"/><rect x="0" y="7.5" width="3" height="3" fill="#fff" stroke="#000"/><rect x="0" y="14.5" width="3" height="3" fill="#fff" stroke="#000"/><path d="M9 4 L14 9 L9 14 L4 9 Z" fill="#000"/><path d="M6.5 9 H11.5 M9 6.5 V11.5" stroke="#20e020" stroke-width="1.6"/><rect x="16.5" y="7.5" width="3" height="3" fill="#fff" stroke="#2040ff" stroke-width="1.2"/></g><rect x="363.5" y="97" width="1" height="1" fill="#181818"/><rect x="363.5" y="99" width="1" height="1" fill="#181818"/><rect x="363.5" y="101" width="1" height="1" fill="#181818"/><rect x="363.5" y="103" width="1" height="1" fill="#181818"/><rect x="363.5" y="105" width="1" height="1" fill="#181818"/><rect x="363.5" y="107" width="1" height="1" fill="#181818"/><rect x="363.5" y="109" width="1" height="1" fill="#181818"/><rect x="363.5" y="111" width="1" height="1" fill="#181818"/><rect x="363.5" y="113" width="1" height="1" fill="#181818"/><text x="377.5" y="108" font-family="Liberation Sans" font-size="13.9" fill="#202040">Search:</text><rect x="431" y="93" width="145" height="23" fill="#fff"/><rect x="431" y="93" width="145" height="1.5" fill="#a0a0a0"/><rect x="431" y="93" width="1.5" height="23" fill="#a0a0a0"/><rect x="578.5" y="93.5" width="21.5" height="22.5" fill="#f0f0f0"/><rect x="578.5" y="93.5" width="21.5" height="1.2" fill="#fff"/><rect x="578.5" y="93.5" width="1.2" height="22.5" fill="#fff"/><rect x="598.5" y="93.5" width="1.5" height="22.5" fill="#9a9a9a"/><rect x="578.5" y="114.5" width="21.5" height="1.5" fill="#9a9a9a"/><path d="M582 101 H596 L589 109 Z" fill="#000"/><g transform="translate(607,96)"><path d="M2 0 H7 V4 H10 V0 H15 L17.5 11 V13 H10 V8 H7 V13 H0 V11 Z" fill="#a0a0a0"/><path d="M1 3 H17 M0 7 H18 M0 10 H18" stroke="#d8d8d8" stroke-width="0.8" stroke-dasharray="1 1"/><path d="M0 16 L3 13.5 L6 16 L3 18.5 Z" fill="#4848ff"/><path d="M6 16 H10" stroke="#4848ff" stroke-dasharray="1 1"/></g><g transform="translate(628,96)"><path d="M2 0 H7 V4 H10 V0 H15 L17.5 11 V13 H10 V8 H7 V13 H0 V11 Z" fill="#a0a0a0"/><path d="M1 3 H17 M0 7 H18 M0 10 H18" stroke="#d8d8d8" stroke-width="0.8" stroke-dasharray="1 1"/><path d="M19 16 L16 13.5 L13 16 L16 18.5 Z" fill="#4848ff"/><path d="M9 16 H13" stroke="#4848ff" stroke-dasharray="1 1"/></g><g transform="translate(656,95)"><rect x="0" y="4" width="11" height="11" fill="#505a68"/><rect x="2" y="0" width="2" height="4" fill="#505a68"/><rect x="6" y="0" width="2" height="4" fill="#505a68"/><rect x="2" y="9" width="4" height="5" fill="#8a96a8"/><path d="M6 18 L13 10" stroke="#78a8e8" stroke-width="4.5" stroke-linecap="round"/><circle cx="15" cy="8" r="4" fill="#b8b8b8"/><circle cx="16" cy="6.5" r="1.8" fill="#f0f0f0"/></g><g transform="translate(708,95)"><circle cx="7.5" cy="7.5" r="6.3" fill="#fff" stroke="#000" stroke-width="1.8"/><path d="M4 7.5 H11 M7.5 4 V11" stroke="#000" stroke-width="2.2"/><path d="M12 12 L17.5 17.5" stroke="#2020c0" stroke-width="3.2"/></g><g transform="translate(736,95)"><circle cx="7.5" cy="7.5" r="6.3" fill="#fff" stroke="#000" stroke-width="1.8"/><path d="M4 7.5 H11" stroke="#000" stroke-width="2.2"/><path d="M12 12 L17.5 17.5" stroke="#2020c0" stroke-width="3.2"/></g><g transform="translate(763.5,95)"><circle cx="7.5" cy="7.5" r="6.8" fill="#0a3c7c" stroke="#001a40" stroke-width="1"/><circle cx="5" cy="5" r="1.5" fill="#6a9ad0"/><path d="M12 12 L17.5 17.5" stroke="#2020c0" stroke-width="3.2"/></g><g transform="translate(790,95)"><rect x="5" y="1" width="2" height="12" fill="#ffd800" stroke="#a07000" stroke-width="0.5"/><rect x="1" y="13" width="12.5" height="6" fill="none" stroke="#ffd800" stroke-width="2"/><circle cx="13" cy="4.5" r="4" fill="#c8c8c8" stroke="#000" stroke-width="1.3"/><path d="M15 8 L19 12" stroke="#2020f0" stroke-width="2.5"/></g><g transform="translate(817,95)"><rect x="3" y="5" width="2" height="9" fill="#ffd800"/><rect x="13" y="5" width="2" height="9" fill="#ffd800"/><rect x="1" y="14" width="7" height="5" fill="none" stroke="#ffd800" stroke-width="2"/><rect x="10.5" y="14" width="7" height="5" fill="none" stroke="#ffd800" stroke-width="2"/><circle cx="13" cy="4" r="3.8" fill="#c8c8c8" stroke="#000" stroke-width="1.3"/><path d="M15 7 L18 11" stroke="#2020f0" stroke-width="2.5"/></g><g transform="translate(845,95)"><rect x="1" y="1" width="12" height="13" fill="none" stroke="#2020c0" stroke-width="1.2" stroke-dasharray="1.5 1"/><path d="M9 10 L13 6 L17 10 L13 14 Z" fill="#c8c8c8" stroke="#404040"/><path d="M15 12 L19 16" stroke="#3030f0" stroke-width="2.5"/></g><rect x="894.5" y="95" width="24.5" height="23" fill="#fff"/><rect x="894.5" y="95" width="24.5" height="1" fill="#a0a0a0"/><rect x="894.5" y="95" width="1" height="23" fill="#a0a0a0"/><g transform="translate(894.5,95)"><rect x="0" y="0" width="24" height="24" fill="#fff"/><path d="M3 21 H22 M12.5 5 V21" stroke="#20a040" stroke-width="1.3"/></g><rect x="927" y="95" width="25" height="24" fill="#f0f0f0"/><rect x="927" y="95" width="25" height="1.2" fill="#fff"/><rect x="927" y="95" width="1.2" height="24" fill="#fff"/><rect x="950.5" y="95" width="1.5" height="24" fill="#9a9a9a"/><rect x="927" y="117.5" width="25" height="1.5" fill="#9a9a9a"/><g transform="translate(927,95)"><rect x="9" y="4" width="8" height="17" fill="#1a1a90"/><path d="M2 20 H9 V5 H17 V20 H23" stroke="#20a040" stroke-width="1.3" fill="none"/></g><rect x="959" y="95" width="25.5" height="24" fill="#f0f0f0"/><rect x="959" y="95" width="25.5" height="1.2" fill="#fff"/><rect x="959" y="95" width="1.2" height="24" fill="#fff"/><rect x="983.0" y="95" width="1.5" height="24" fill="#9a9a9a"/><rect x="959" y="117.5" width="25.5" height="1.5" fill="#9a9a9a"/><g transform="translate(960,95)"><rect x="2" y="4" width="20" height="17" fill="#005a10"/><path d="M2 20 H5 V5 H10 V20 H14 V5 H19 V20 H22" stroke="#20a040" stroke-width="1.3" fill="none"/></g><rect x="995.5" y="98" width="1" height="1" fill="#181818"/><rect x="995.5" y="100" width="1" height="1" fill="#181818"/><rect x="995.5" y="102" width="1" height="1" fill="#181818"/><rect x="995.5" y="104" width="1" height="1" fill="#181818"/><rect x="995.5" y="106" width="1" height="1" fill="#181818"/><rect x="995.5" y="108" width="1" height="1" fill="#181818"/><rect x="995.5" y="110" width="1" height="1" fill="#181818"/><rect x="995.5" y="112" width="1" height="1" fill="#181818"/><rect x="995.5" y="114" width="1" height="1" fill="#181818"/><rect x="995.5" y="116" width="1" height="1" fill="#181818"/><g transform="translate(1005,97)"><rect x="0" y="0" width="21" height="20" fill="#5a5aaa" opacity="0.7"/><rect x="0" y="0" width="21" height="20" fill="none" stroke="#2a2a8a" stroke-dasharray="1 1"/><path d="M0 19 H10 V1 H21" stroke="#30a050" stroke-width="1.2" stroke-dasharray="1 1" fill="none"/></g><g transform="translate(1034,97)"><rect x="7" y="0" width="5" height="20" fill="#6a6aaa" opacity="0.8"/><path d="M0 19 H7 V1" stroke="#f0f000" stroke-width="1.2" stroke-dasharray="1 1" fill="none"/><path d="M9 19 V1 H18" stroke="#30a050" stroke-width="1.2" stroke-dasharray="1 1" fill="none"/></g><g transform="translate(1062,97)"><path d="M0 19 H10 V1 H19" stroke="#30a050" stroke-width="1.3" stroke-dasharray="1 1" fill="none"/></g><g transform="translate(1089,97)"><path d="M0 19 H7" stroke="#30a050" stroke-width="1.3" stroke-dasharray="1 1"/><path d="M8 19 V1" stroke="#f0f000" stroke-width="1.4" stroke-dasharray="1 0.5"/><path d="M9 1 H19" stroke="#30a050" stroke-width="1.3" stroke-dasharray="1 1"/></g></svg>
<div class="a" style="left:0;top:127px;width:1877px;height:4px;background:#fdfdfd"></div>
<div class="a" style="left:0;top:131px;width:323px;height:675px;background:#fff"></div>
<div class="a" style="left:0;top:131px;width:194px;height:23px;background:#808080"></div>
<div class="a" style="left:197px;top:131px;width:126px;height:23px;background:#808080"></div>
<div class="a" style="left:6px;top:157px;width:188px;height:596px;background:#808080"></div>
<div class="a" style="left:197px;top:157px;width:126px;height:596px;background:#808080"></div>
<div class="a" style="left:326px;top:131px;width:1551px;height:23px;background:#000"></div>
<div class="a" style="left:326px;top:157px;width:1551px;height:596px;background:#000"></div>
<div class="a" style="left:326px;top:757px;width:1551px;height:49px;background:#000"></div>
<div class="a" style="left:0;top:757px;width:194px;height:27px;background:#808080"></div>
<div class="a" style="left:197px;top:757px;width:126px;height:27px;background:#808080"></div>
<div class="a" style="left:0;top:784px;width:56px;height:22px;background:#808080"></div>
<div class="a" style="left:56px;top:784px;width:138px;height:22px;background:#fff"></div>
<div class="a" style="left:197px;top:784px;width:126px;height:22px;background:#fff"></div>
<div class="a" style="left:6px;top:224px;width:188px;height:20.5px;background:#fff"></div>
<div class="a" style="left:197px;top:224px;width:126px;height:20.5px;background:#fff"></div>
<div class="t" style="left:56px;top:163.70px;font-size:13.8px;color:#f4f4f4">/bin_to_bcd_tb/clk</div>
<div class="t" style="left:201px;top:163.70px;font-size:13.8px;color:#f4f4f4">1'h0</div>
<div class="t" style="left:56px;top:184.92px;font-size:13.8px;color:#f4f4f4">/bin_to_bcd_tb/rst_n</div>
<div class="t" style="left:201px;top:184.92px;font-size:13.8px;color:#f4f4f4">1'h1</div>
<div class="t" style="left:56px;top:206.14px;font-size:13.8px;color:#f4f4f4">/bin_to_bcd_tb/bin...</div>
<div class="t" style="left:201px;top:206.14px;font-size:13.8px;color:#f4f4f4">27'b1101101010...</div>
<div class="t" style="left:56px;top:227.36px;font-size:13.8px;color:#000">/bin_to_bcd_tb/bcd...</div>
<div class="t" style="left:201px;top:227.36px;font-size:13.8px;color:#000">32'b0001010001...</div>
<div class="t" style="left:79px;top:248.58px;font-size:13.8px;color:#f4f4f4">[31]</div>
<div class="t" style="left:201px;top:248.58px;font-size:13.8px;color:#f4f4f4">1'h0</div>
<div class="t" style="left:79px;top:269.80px;font-size:13.8px;color:#f4f4f4">[30]</div>
<div class="t" style="left:201px;top:269.80px;font-size:13.8px;color:#f4f4f4">1'h0</div>
<div class="t" style="left:79px;top:291.02px;font-size:13.8px;color:#f4f4f4">[29]</div>
<div class="t" style="left:201px;top:291.02px;font-size:13.8px;color:#f4f4f4">1'h0</div>
<div class="t" style="left:79px;top:312.24px;font-size:13.8px;color:#f4f4f4">[28]</div>
<div class="t" style="left:201px;top:312.24px;font-size:13.8px;color:#f4f4f4">1'h1</div>
<div class="t" style="left:79px;top:333.46px;font-size:13.8px;color:#f4f4f4">[27]</div>
<div class="t" style="left:201px;top:333.46px;font-size:13.8px;color:#f4f4f4">1'h0</div>
<div class="t" style="left:79px;top:354.68px;font-size:13.8px;color:#f4f4f4">[26]</div>
<div class="t" style="left:201px;top:354.68px;font-size:13.8px;color:#f4f4f4">1'h1</div>
<div class="t" style="left:79px;top:375.90px;font-size:13.8px;color:#f4f4f4">[25]</div>
<div class="t" style="left:201px;top:375.90px;font-size:13.8px;color:#f4f4f4">1'h0</div>
<div class="t" style="left:79px;top:397.12px;font-size:13.8px;color:#f4f4f4">[24]</div>
<div class="t" style="left:201px;top:397.12px;font-size:13.8px;color:#f4f4f4">1'h0</div>
<div class="t" style="left:79px;top:418.34px;font-size:13.8px;color:#f4f4f4">[23]</div>
<div class="t" style="left:201px;top:418.34px;font-size:13.8px;color:#f4f4f4">1'h0</div>
<div class="t" style="left:79px;top:439.56px;font-size:13.8px;color:#f4f4f4">[22]</div>
<div class="t" style="left:201px;top:439.56px;font-size:13.8px;color:#f4f4f4">1'h1</div>
<div class="t" style="left:79px;top:460.78px;font-size:13.8px;color:#f4f4f4">[21]</div>
<div class="t" style="left:201px;top:460.78px;font-size:13.8px;color:#f4f4f4">1'h0</div>
<div class="t" style="left:79px;top:482.00px;font-size:13.8px;color:#f4f4f4">[20]</div>
<div class="t" style="left:201px;top:482.00px;font-size:13.8px;color:#f4f4f4">1'h1</div>
<div class="t" style="left:79px;top:503.22px;font-size:13.8px;color:#f4f4f4">[19]</div>
<div class="t" style="left:201px;top:503.22px;font-size:13.8px;color:#f4f4f4">1'h0</div>
<div class="t" style="left:79px;top:524.44px;font-size:13.8px;color:#f4f4f4">[18]</div>
<div class="t" style="left:201px;top:524.44px;font-size:13.8px;color:#f4f4f4">1'h1</div>
<div class="t" style="left:79px;top:545.66px;font-size:13.8px;color:#f4f4f4">[17]</div>
<div class="t" style="left:201px;top:545.66px;font-size:13.8px;color:#f4f4f4">1'h1</div>
<div class="t" style="left:79px;top:566.88px;font-size:13.8px;color:#f4f4f4">[16]</div>
<div class="t" style="left:201px;top:566.88px;font-size:13.8px;color:#f4f4f4">1'h1</div>
<div class="t" style="left:79px;top:588.10px;font-size:13.8px;color:#f4f4f4">[15]</div>
<div class="t" style="left:201px;top:588.10px;font-size:13.8px;color:#f4f4f4">1'h1</div>
<div class="t" style="left:79px;top:609.32px;font-size:13.8px;color:#f4f4f4">[14]</div>
<div class="t" style="left:201px;top:609.32px;font-size:13.8px;color:#f4f4f4">1'h0</div>
<div class="t" style="left:79px;top:630.54px;font-size:13.8px;color:#f4f4f4">[13]</div>
<div class="t" style="left:201px;top:630.54px;font-size:13.8px;color:#f4f4f4">1'h0</div>
<div class="t" style="left:79px;top:651.76px;font-size:13.8px;color:#f4f4f4">[12]</div>
<div class="t" style="left:201px;top:651.76px;font-size:13.8px;color:#f4f4f4">1'h1</div>
<div class="t" style="left:79px;top:672.98px;font-size:13.8px;color:#f4f4f4">[11]</div>
<div class="t" style="left:201px;top:672.98px;font-size:13.8px;color:#f4f4f4">1'h0</div>
<div class="t" style="left:79px;top:694.20px;font-size:13.8px;color:#f4f4f4">[10]</div>
<div class="t" style="left:201px;top:694.20px;font-size:13.8px;color:#f4f4f4">1'h1</div>
<div class="t" style="left:79px;top:715.42px;font-size:13.8px;color:#f4f4f4">[9]</div>
<div class="t" style="left:201px;top:715.42px;font-size:13.8px;color:#f4f4f4">1'h0</div>
<div class="t" style="left:79px;top:736.64px;font-size:13.8px;color:#f4f4f4">[8]</div>
<div class="t" style="left:201px;top:736.64px;font-size:13.8px;color:#f4f4f4">1'h0</div>
<div class="t" style="left:285px;top:136px;font-size:13px;color:#e8e8e8">Msgs</div>
<div class="t" style="left:154px;top:764px;font-size:13.8px;color:#f4f4f4">Now</div>
<div class="t" style="left:238px;top:764px;font-size:13.8px;color:#f4f4f4">1020000 ps</div>
<div class="t" style="left:130px;top:789px;font-size:13.8px;color:#000">Cursor 1</div>
<div class="t" style="left:246px;top:789px;font-size:13.8px;color:#000">143150 ps</div>
<svg class="a" style="left:326px;top:131px" width="1551" height="675" viewBox="326 131 1551 675">
<rect x="350" y="157" width="1" height="596" fill="#808080"/>
<rect x="405" y="157" width="1" height="596" fill="#808080"/>
<rect x="461" y="157" width="1" height="596" fill="#808080"/>
<rect x="516" y="157" width="1" height="596" fill="#808080"/>
<rect x="572" y="157" width="1" height="596" fill="#808080"/>
<rect x="627" y="157" width="1" height="596" fill="#808080"/>
<rect x="683" y="157" width="1" height="596" fill="#808080"/>
<rect x="738" y="157" width="1" height="596" fill="#808080"/>
<rect x="794" y="157" width="1" height="596" fill="#808080"/>
<rect x="849" y="157" width="1" height="596" fill="#808080"/>
<rect x="905" y="157" width="1" height="596" fill="#808080"/>
<rect x="960" y="157" width="1" height="596" fill="#808080"/>
<rect x="1016" y="157" width="1" height="596" fill="#808080"/>
<rect x="1071" y="157" width="1" height="596" fill="#808080"/>
<rect x="1127" y="157" width="1" height="596" fill="#808080"/>
<rect x="1182" y="157" width="1" height="596" fill="#808080"/>
<rect x="1238" y="157" width="1" height="596" fill="#808080"/>
<rect x="1293" y="157" width="1" height="596" fill="#808080"/>
<rect x="1349" y="157" width="1" height="596" fill="#808080"/>
<rect x="1404" y="157" width="1" height="596" fill="#808080"/>
<rect x="1460" y="157" width="1" height="596" fill="#808080"/>
<rect x="1515" y="157" width="1" height="596" fill="#808080"/>
<rect x="1571" y="157" width="1" height="596" fill="#808080"/>
<rect x="1626" y="157" width="1" height="596" fill="#808080"/>
<rect x="1682" y="157" width="1" height="596" fill="#808080"/>
<rect x="1737" y="157" width="1" height="596" fill="#808080"/>
<rect x="1793" y="157" width="1" height="596" fill="#808080"/>
<rect x="1848" y="157" width="1" height="596" fill="#808080"/>
<path d="M331 162.75 H350.5 V177.75 H489.5 V162.75 H627.5 V177.75 H766.5 V162.75 H905.5 V177.75 H1044.5 V162.75 H1182.5 V177.75 H1321.5 V162.75 H1460.5 V177.75 H1599.5 V162.75 H1737.5 V177.75 H1876.5 V162.75 H1877" stroke="#00cc00" stroke-width="1.5" fill="none" stroke-linejoin="miter"/>
<path d="M331 183.75 H1877" stroke="#00cc00" stroke-width="1.5" fill="none" stroke-linejoin="miter"/>
<path d="M331 262.75 H1877" stroke="#00cc00" stroke-width="1.5" fill="none" stroke-linejoin="miter"/>
<path d="M331 283.75 H905.5 V268.75 H1182.5 V283.75 H1877" stroke="#00cc00" stroke-width="1.5" fill="none" stroke-linejoin="miter"/>
<path d="M331 289.75 H350.5 V304.75 H1877" stroke="#00cc00" stroke-width="1.5" fill="none" stroke-linejoin="miter"/>
<path d="M331 326.75 H350.5 V311.75 H1182.5 V326.75 H1460.5 V311.75 H1737.5 V326.75 H1877" stroke="#00cc00" stroke-width="1.5" fill="none" stroke-linejoin="miter"/>
<path d="M331 347.75 H1182.5 V332.75 H1460.5 V347.75 H1877" stroke="#00cc00" stroke-width="1.5" fill="none" stroke-linejoin="miter"/>
<path d="M331 368.75 H350.5 V353.75 H905.5 V368.75 H1460.5 V353.75 H1737.5 V368.75 H1877" stroke="#00cc00" stroke-width="1.5" fill="none" stroke-linejoin="miter"/>
<path d="M331 389.75 H905.5 V374.75 H1182.5 V389.75 H1737.5 V374.75 H1877" stroke="#00cc00" stroke-width="1.5" fill="none" stroke-linejoin="miter"/>
<path d="M331 410.75 H350.5 V395.75 H627.5 V410.75 H1182.5 V395.75 H1460.5 V410.75 H1737.5 V395.75 H1877" stroke="#00cc00" stroke-width="1.5" fill="none" stroke-linejoin="miter"/>
<path d="M331 432.75 H350.5 V417.75 H905.5 V432.75 H1182.5 V417.75 H1460.5 V432.75 H1877" stroke="#00cc00" stroke-width="1.5" fill="none" stroke-linejoin="miter"/>
<path d="M331 438.75 H350.5 V453.75 H905.5 V438.75 H1182.5 V453.75 H1460.5 V438.75 H1877" stroke="#00cc00" stroke-width="1.5" fill="none" stroke-linejoin="miter"/>
<path d="M331 474.75 H905.5 V459.75 H1182.5 V474.75 H1737.5 V459.75 H1877" stroke="#00cc00" stroke-width="1.5" fill="none" stroke-linejoin="miter"/>
<path d="M331 495.75 H350.5 V480.75 H627.5 V495.75 H1182.5 V480.75 H1737.5 V495.75 H1877" stroke="#00cc00" stroke-width="1.5" fill="none" stroke-linejoin="miter"/>
<path d="M331 517.75 H350.5 V502.75 H627.5 V517.75 H905.5 V502.75 H1182.5 V517.75 H1877" stroke="#00cc00" stroke-width="1.5" fill="none" stroke-linejoin="miter"/>
<path d="M331 538.75 H1182.5 V523.75 H1877" stroke="#00cc00" stroke-width="1.5" fill="none" stroke-linejoin="miter"/>
<path d="M331 559.75 H1460.5 V544.75 H1877" stroke="#00cc00" stroke-width="1.5" fill="none" stroke-linejoin="miter"/>
<path d="M331 580.75 H1182.5 V565.75 H1877" stroke="#00cc00" stroke-width="1.5" fill="none" stroke-linejoin="miter"/>
<path d="M331 601.75 H1460.5 V586.75 H1737.5 V601.75 H1877" stroke="#00cc00" stroke-width="1.5" fill="none" stroke-linejoin="miter"/>
<path d="M331 623.75 H627.5 V608.75 H1460.5 V623.75 H1737.5 V608.75 H1877" stroke="#00cc00" stroke-width="1.5" fill="none" stroke-linejoin="miter"/>
<path d="M331 629.75 H1460.5 V644.75 H1877" stroke="#00cc00" stroke-width="1.5" fill="none" stroke-linejoin="miter"/>
<path d="M331 665.75 H350.5 V650.75 H627.5 V665.75 H905.5 V650.75 H1182.5 V665.75 H1460.5 V650.75 H1877" stroke="#00cc00" stroke-width="1.5" fill="none" stroke-linejoin="miter"/>
<path d="M331 686.75 H1877" stroke="#00cc00" stroke-width="1.5" fill="none" stroke-linejoin="miter"/>
<path d="M331 693.75 H350.5 V707.75 H1182.5 V693.75 H1877" stroke="#00cc00" stroke-width="1.5" fill="none" stroke-linejoin="miter"/>
<path d="M331 714.75 H627.5 V729.75 H905.5 V714.75 H1182.5 V729.75 H1737.5 V714.75 H1877" stroke="#00cc00" stroke-width="1.5" fill="none" stroke-linejoin="miter"/>
<path d="M331 735.75 H627.5 V750.75 H1737.5 V735.75 H1877" stroke="#00cc00" stroke-width="1.5" fill="none" stroke-linejoin="miter"/>
<path d="M331 205.5 H349 M331 220.5 H349 M353 205.5 H626 M353 220.5 H626 M630 205.5 H904 M630 220.5 H904 M908 205.5 H1181 M908 220.5 H1181 M1185 205.5 H1459 M1185 220.5 H1459 M1463 205.5 H1736 M1463 220.5 H1736 M1740 205.5 H1877 M1740 220.5 H1877 M349 205.5 L350.5 207.5 V218.5 L349 220.5 M353 205.5 L351.5 207.5 V218.5 L353 220.5 M626 205.5 L627.5 207.5 V218.5 L626 220.5 M630 205.5 L628.5 207.5 V218.5 L630 220.5 M904 205.5 L905.5 207.5 V218.5 L904 220.5 M908 205.5 L906.5 207.5 V218.5 L908 220.5 M1181 205.5 L1182.5 207.5 V218.5 L1181 220.5 M1185 205.5 L1183.5 207.5 V218.5 L1185 220.5 M1459 205.5 L1460.5 207.5 V218.5 L1459 220.5 M1463 205.5 L1461.5 207.5 V218.5 L1463 220.5 M1736 205.5 L1737.5 207.5 V218.5 L1736 220.5 M1740 205.5 L1738.5 207.5 V218.5 L1740 220.5 " stroke="#96e696" stroke-width="1" fill="none"/>
<text x="355.80" y="218.40" font-family="Liberation Sans" font-size="13.8" fill="#f4f4f4">27'b000111100111110001100000001</text>
<text x="633.30" y="218.40" font-family="Liberation Sans" font-size="13.8" fill="#f4f4f4">27'b110110101111100110100001101</text>
<text x="910.80" y="218.40" font-family="Liberation Sans" font-size="13.8" fill="#f4f4f4">27'b011001000111111000101110110</text>
<text x="1188.30" y="218.40" font-family="Liberation Sans" font-size="13.8" fill="#f4f4f4">27'b110100011011100110100111101</text>
<text x="1465.80" y="218.40" font-family="Liberation Sans" font-size="13.8" fill="#f4f4f4">27'b110110101000101011111101101</text>
<text x="1743.30" y="218.40" font-family="Liberation Sans" font-size="13.8" fill="#f4f4f4">27'b11000101101...</text>
<path d="M331 226.5 H349 M331 241.5 H349 M353 226.5 H626 M353 241.5 H626 M630 226.5 H904 M630 241.5 H904 M908 226.5 H1181 M908 241.5 H1181 M1185 226.5 H1459 M1185 241.5 H1459 M1463 226.5 H1736 M1463 241.5 H1736 M1740 226.5 H1877 M1740 241.5 H1877 M349 226.5 L350.5 228.5 V239.5 L349 241.5 M353 226.5 L351.5 228.5 V239.5 L353 241.5 M626 226.5 L627.5 228.5 V239.5 L626 241.5 M630 226.5 L628.5 228.5 V239.5 L630 241.5 M904 226.5 L905.5 228.5 V239.5 L904 241.5 M908 226.5 L906.5 228.5 V239.5 L908 241.5 M1181 226.5 L1182.5 228.5 V239.5 L1181 241.5 M1185 226.5 L1183.5 228.5 V239.5 L1185 241.5 M1459 226.5 L1460.5 228.5 V239.5 L1459 241.5 M1463 226.5 L1461.5 228.5 V239.5 L1463 241.5 M1736 226.5 L1737.5 228.5 V239.5 L1736 241.5 M1740 226.5 L1738.5 228.5 V239.5 L1740 241.5 " stroke="#96e696" stroke-width="1" fill="none"/>
<text x="355.80" y="239.40" font-family="Liberation Sans" font-size="13.8" fill="#f4f4f4">32'b00010101100110000011001101100001</text>
<text x="633.30" y="239.40" font-family="Liberation Sans" font-size="13.8" fill="#f4f4f4">32'b00010100100000000110000000101001</text>
<text x="910.80" y="239.40" font-family="Liberation Sans" font-size="13.8" fill="#f4f4f4">32'b01010010011010000111001000100010</text>
<text x="1188.30" y="239.40" font-family="Liberation Sans" font-size="13.8" fill="#f4f4f4">32'b00001001100101010110010000010011</text>
<text x="1465.80" y="239.40" font-family="Liberation Sans" font-size="13.8" fill="#f4f4f4">32'b00010100010101111001010000110111</text>
<text x="1743.30" y="239.40" font-family="Liberation Sans" font-size="13.8" fill="#f4f4f4">32'b00000011011...</text>
<rect x="1545.91" y="132" width="3.6" height="21.5" fill="#ffd200"/>
<rect x="1545.91" y="157" width="3.6" height="627" fill="#ffd200"/>
<rect x="335.93" y="761" width="1.2" height="4.5" fill="#00c800"/>
<rect x="349.80" y="757.5" width="1.2" height="8" fill="#00c800"/>
<rect x="363.68" y="761" width="1.2" height="4.5" fill="#00c800"/>
<rect x="377.55" y="761" width="1.2" height="4.5" fill="#00c800"/>
<rect x="391.43" y="761" width="1.2" height="4.5" fill="#00c800"/>
<rect x="405.30" y="761" width="1.2" height="4.5" fill="#00c800"/>
<rect x="419.18" y="757.5" width="1.2" height="8" fill="#00c800"/>
<rect x="433.05" y="761" width="1.2" height="4.5" fill="#00c800"/>
<rect x="446.93" y="761" width="1.2" height="4.5" fill="#00c800"/>
<rect x="460.80" y="761" width="1.2" height="4.5" fill="#00c800"/>
<rect x="474.68" y="761" width="1.2" height="4.5" fill="#00c800"/>
<rect x="488.55" y="757.5" width="1.2" height="8" fill="#00c800"/>
<rect x="502.43" y="761" width="1.2" height="4.5" fill="#00c800"/>
<rect x="516.30" y="761" width="1.2" height="4.5" fill="#00c800"/>
<rect x="530.17" y="761" width="1.2" height="4.5" fill="#00c800"/>
<rect x="544.05" y="761" width="1.2" height="4.5" fill="#00c800"/>
<rect x="557.92" y="757.5" width="1.2" height="8" fill="#00c800"/>
<rect x="571.80" y="761" width="1.2" height="4.5" fill="#00c800"/>
<rect x="585.67" y="761" width="1.2" height="4.5" fill="#00c800"/>
<rect x="599.55" y="761" width="1.2" height="4.5" fill="#00c800"/>
<rect x="613.42" y="761" width="1.2" height="4.5" fill="#00c800"/>
<rect x="627.30" y="757.5" width="1.2" height="8" fill="#00c800"/>
<rect x="641.17" y="761" width="1.2" height="4.5" fill="#00c800"/>
<rect x="655.05" y="761" width="1.2" height="4.5" fill="#00c800"/>
<rect x="668.92" y="761" width="1.2" height="4.5" fill="#00c800"/>
<rect x="682.80" y="761" width="1.2" height="4.5" fill="#00c800"/>
<rect x="696.67" y="757.5" width="1.2" height="8" fill="#00c800"/>
<rect x="710.55" y="761" width="1.2" height="4.5" fill="#00c800"/>
<rect x="724.42" y="761" width="1.2" height="4.5" fill="#00c800"/>
<rect x="738.30" y="761" width="1.2" height="4.5" fill="#00c800"/>
<rect x="752.17" y="761" width="1.2" height="4.5" fill="#00c800"/>
<rect x="766.05" y="757.5" width="1.2" height="8" fill="#00c800"/>
<rect x="779.92" y="761" width="1.2" height="4.5" fill="#00c800"/>
<rect x="793.80" y="761" width="1.2" height="4.5" fill="#00c800"/>
<rect x="807.67" y="761" width="1.2" height="4.5" fill="#00c800"/>
<rect x="821.55" y="761" width="1.2" height="4.5" fill="#00c800"/>
<rect x="835.42" y="757.5" width="1.2" height="8" fill="#00c800"/>
<rect x="849.30" y="761" width="1.2" height="4.5" fill="#00c800"/>
<rect x="863.17" y="761" width="1.2" height="4.5" fill="#00c800"/>
<rect x="877.05" y="761" width="1.2" height="4.5" fill="#00c800"/>
<rect x="890.92" y="761" width="1.2" height="4.5" fill="#00c800"/>
<rect x="904.80" y="757.5" width="1.2" height="8" fill="#00c800"/>
<rect x="918.67" y="761" width="1.2" height="4.5" fill="#00c800"/>
<rect x="932.55" y="761" width="1.2" height="4.5" fill="#00c800"/>
<rect x="946.42" y="761" width="1.2" height="4.5" fill="#00c800"/>
<rect x="960.30" y="761" width="1.2" height="4.5" fill="#00c800"/>
<rect x="974.17" y="757.5" width="1.2" height="8" fill="#00c800"/>
<rect x="988.05" y="761" width="1.2" height="4.5" fill="#00c800"/>
<rect x="1001.92" y="761" width="1.2" height="4.5" fill="#00c800"/>
<rect x="1015.80" y="761" width="1.2" height="4.5" fill="#00c800"/>
<rect x="1029.67" y="761" width="1.2" height="4.5" fill="#00c800"/>
<rect x="1043.55" y="757.5" width="1.2" height="8" fill="#00c800"/>
<rect x="1057.42" y="761" width="1.2" height="4.5" fill="#00c800"/>
<rect x="1071.30" y="761" width="1.2" height="4.5" fill="#00c800"/>
<rect x="1085.17" y="761" width="1.2" height="4.5" fill="#00c800"/>
<rect x="1099.05" y="761" width="1.2" height="4.5" fill="#00c800"/>
<rect x="1112.92" y="757.5" width="1.2" height="8" fill="#00c800"/>
<rect x="1126.80" y="761" width="1.2" height="4.5" fill="#00c800"/>
<rect x="1140.67" y="761" width="1.2" height="4.5" fill="#00c800"/>
<rect x="1154.55" y="761" width="1.2" height="4.5" fill="#00c800"/>
<rect x="1168.42" y="761" width="1.2" height="4.5" fill="#00c800"/>
<rect x="1182.30" y="757.5" width="1.2" height="8" fill="#00c800"/>
<rect x="1196.17" y="761" width="1.2" height="4.5" fill="#00c800"/>
<rect x="1210.05" y="761" width="1.2" height="4.5" fill="#00c800"/>
<rect x="1223.92" y="761" width="1.2" height="4.5" fill="#00c800"/>
<rect x="1237.80" y="761" width="1.2" height="4.5" fill="#00c800"/>
<rect x="1251.67" y="757.5" width="1.2" height="8" fill="#00c800"/>
<rect x="1265.55" y="761" width="1.2" height="4.5" fill="#00c800"/>
<rect x="1279.42" y="761" width="1.2" height="4.5" fill="#00c800"/>
<rect x="1293.30" y="761" width="1.2" height="4.5" fill="#00c800"/>
<rect x="1307.17" y="761" width="1.2" height="4.5" fill="#00c800"/>
<rect x="1321.05" y="757.5" width="1.2" height="8" fill="#00c800"/>
<rect x="1334.92" y="761" width="1.2" height="4.5" fill="#00c800"/>
<rect x="1348.80" y="761" width="1.2" height="4.5" fill="#00c800"/>
<rect x="1362.67" y="761" width="1.2" height="4.5" fill="#00c800"/>
<rect x="1376.55" y="761" width="1.2" height="4.5" fill="#00c800"/>
<rect x="1390.42" y="757.5" width="1.2" height="8" fill="#00c800"/>
<rect x="1404.30" y="761" width="1.2" height="4.5" fill="#00c800"/>
<rect x="1418.17" y="761" width="1.2" height="4.5" fill="#00c800"/>
<rect x="1432.05" y="761" width="1.2" height="4.5" fill="#00c800"/>
<rect x="1445.92" y="761" width="1.2" height="4.5" fill="#00c800"/>
<rect x="1459.80" y="757.5" width="1.2" height="8" fill="#00c800"/>
<rect x="1473.67" y="761" width="1.2" height="4.5" fill="#00c800"/>
<rect x="1487.55" y="761" width="1.2" height="4.5" fill="#00c800"/>
<rect x="1501.42" y="761" width="1.2" height="4.5" fill="#00c800"/>
<rect x="1515.30" y="761" width="1.2" height="4.5" fill="#00c800"/>
<rect x="1529.17" y="757.5" width="1.2" height="8" fill="#00c800"/>
<rect x="1543.05" y="761" width="1.2" height="4.5" fill="#00c800"/>
<rect x="1556.92" y="761" width="1.2" height="4.5" fill="#00c800"/>
<rect x="1570.80" y="761" width="1.2" height="4.5" fill="#00c800"/>
<rect x="1584.67" y="761" width="1.2" height="4.5" fill="#00c800"/>
<rect x="1598.55" y="757.5" width="1.2" height="8" fill="#00c800"/>
<rect x="1612.42" y="761" width="1.2" height="4.5" fill="#00c800"/>
<rect x="1626.30" y="761" width="1.2" height="4.5" fill="#00c800"/>
<rect x="1640.17" y="761" width="1.2" height="4.5" fill="#00c800"/>
<rect x="1654.05" y="761" width="1.2" height="4.5" fill="#00c800"/>
<rect x="1667.92" y="757.5" width="1.2" height="8" fill="#00c800"/>
<rect x="1681.80" y="761" width="1.2" height="4.5" fill="#00c800"/>
<rect x="1695.67" y="761" width="1.2" height="4.5" fill="#00c800"/>
<rect x="1709.55" y="761" width="1.2" height="4.5" fill="#00c800"/>
<rect x="1723.42" y="761" width="1.2" height="4.5" fill="#00c800"/>
<rect x="1737.30" y="757.5" width="1.2" height="8" fill="#00c800"/>
<rect x="1751.17" y="761" width="1.2" height="4.5" fill="#00c800"/>
<rect x="1765.05" y="761" width="1.2" height="4.5" fill="#00c800"/>
<rect x="1778.92" y="761" width="1.2" height="4.5" fill="#00c800"/>
<rect x="1792.80" y="761" width="1.2" height="4.5" fill="#00c800"/>
<rect x="1806.67" y="757.5" width="1.2" height="8" fill="#00c800"/>
<rect x="1820.55" y="761" width="1.2" height="4.5" fill="#00c800"/>
<rect x="1834.42" y="761" width="1.2" height="4.5" fill="#00c800"/>
<rect x="1848.30" y="761" width="1.2" height="4.5" fill="#00c800"/>
<rect x="1862.17" y="761" width="1.2" height="4.5" fill="#00c800"/>
<rect x="1876.05" y="757.5" width="1.2" height="8" fill="#00c800"/>
<defs><clipPath id="tlc"><rect x="329" y="757" width="1548" height="30"/></clipPath></defs><g clip-path="url(#tlc)">
<text x="350.30" y="781" text-anchor="middle" font-family="Liberation Sans" font-size="13.3" fill="#00d800">100000 ps</text>
<text x="489.05" y="781" text-anchor="middle" font-family="Liberation Sans" font-size="13.3" fill="#00d800">105000 ps</text>
<text x="627.80" y="781" text-anchor="middle" font-family="Liberation Sans" font-size="13.3" fill="#00d800">110000 ps</text>
<text x="766.55" y="781" text-anchor="middle" font-family="Liberation Sans" font-size="13.3" fill="#00d800">115000 ps</text>
<text x="905.30" y="781" text-anchor="middle" font-family="Liberation Sans" font-size="13.3" fill="#00d800">120000 ps</text>
<text x="1044.05" y="781" text-anchor="middle" font-family="Liberation Sans" font-size="13.3" fill="#00d800">125000 ps</text>
<text x="1182.80" y="781" text-anchor="middle" font-family="Liberation Sans" font-size="13.3" fill="#00d800">130000 ps</text>
<text x="1321.55" y="781" text-anchor="middle" font-family="Liberation Sans" font-size="13.3" fill="#00d800">135000 ps</text>
<text x="1460.30" y="781" text-anchor="middle" font-family="Liberation Sans" font-size="13.3" fill="#00d800">140000 ps</text>
<text x="1599.05" y="781" text-anchor="middle" font-family="Liberation Sans" font-size="13.3" fill="#00d800">145000 ps</text>
<text x="1737.80" y="781" text-anchor="middle" font-family="Liberation Sans" font-size="13.3" fill="#00d800">150000 ps</text>
<text x="1876.55" y="781" text-anchor="middle" font-family="Liberation Sans" font-size="13.3" fill="#00d800">155000 ps</text>
<text x="2015.30" y="781" text-anchor="middle" font-family="Liberation Sans" font-size="13.3" fill="#00d800">160000 ps</text>
</g>
<rect x="330" y="784.8" width="1547" height="1.2" fill="#7c7c7c"/>
<rect x="1514.5" y="786.5" width="67" height="19" fill="#000" stroke="#e8b400" stroke-width="1"/>
<text x="1547.71" y="801" text-anchor="middle" font-family="Liberation Sans" font-size="13.3" fill="#ffd200">143150 ps</text>
</svg>
<svg class="a" style="left:0;top:0" width="1877" height="836" viewBox="0 0 1877 836"><defs><pattern id="hatch" width="2" height="2" patternUnits="userSpaceOnUse"><rect width="2" height="2" fill="#fafafa"/><rect width="1" height="1" fill="#e8e8e8"/><rect x="1" y="1" width="1" height="1" fill="#e8e8e8"/></pattern></defs><rect x="0" y="806" width="1877" height="30" fill="#f0f0f0"/><rect x="0" y="807.5" width="323" height="1.2" fill="#a8a8a8"/><rect x="326" y="807.5" width="1551" height="1.2" fill="#a8a8a8"/><rect x="0" y="810" width="6" height="22" fill="#808080"/><rect x="6" y="810" width="187" height="22" fill="url(#hatch)"/><rect x="6" y="810.5" width="20.5" height="21.0" fill="#f0f0f0"/><rect x="6" y="810.5" width="20.5" height="1" fill="#fff"/><rect x="6" y="810.5" width="1" height="21.0" fill="#fff"/><rect x="25.0" y="810.5" width="1.5" height="21.0" fill="#a0a0a0"/><rect x="6" y="830.0" width="20.5" height="1.5" fill="#a0a0a0"/><path d="M13.25 821.0 L18.25 816.0 V826.0 Z" fill="#a0a0a0"/><rect x="26.5" y="810.5" width="130.0" height="21.0" fill="#f0f0f0"/><rect x="26.5" y="810.5" width="130.0" height="1" fill="#fff"/><rect x="26.5" y="810.5" width="1" height="21.0" fill="#fff"/><rect x="155.0" y="810.5" width="1.5" height="21.0" fill="#a0a0a0"/><rect x="26.5" y="830.0" width="130.0" height="1.5" fill="#a0a0a0"/><rect x="172.5" y="810.5" width="19.5" height="21.0" fill="#f0f0f0"/><rect x="172.5" y="810.5" width="19.5" height="1" fill="#fff"/><rect x="172.5" y="810.5" width="1" height="21.0" fill="#fff"/><rect x="190.5" y="810.5" width="1.5" height="21.0" fill="#a0a0a0"/><rect x="172.5" y="830.0" width="19.5" height="1.5" fill="#a0a0a0"/><path d="M185.25 821.0 L180.25 816.0 V826.0 Z" fill="#a0a0a0"/><rect x="192" y="810" width="1.5" height="23" fill="#909090"/><rect x="0" y="831.5" width="193" height="1.5" fill="#909090"/><rect x="197" y="810" width="125" height="22" fill="url(#hatch)"/><rect x="197.5" y="810.5" width="20.0" height="21.0" fill="#f0f0f0"/><rect x="197.5" y="810.5" width="20.0" height="1" fill="#fff"/><rect x="197.5" y="810.5" width="1" height="21.0" fill="#fff"/><rect x="216.0" y="810.5" width="1.5" height="21.0" fill="#a0a0a0"/><rect x="197.5" y="830.0" width="20.0" height="1.5" fill="#a0a0a0"/><path d="M204.5 821.0 L209.5 816.0 V826.0 Z" fill="#a0a0a0"/><rect x="218" y="810.5" width="37.5" height="21.0" fill="#f0f0f0"/><rect x="218" y="810.5" width="37.5" height="1" fill="#fff"/><rect x="218" y="810.5" width="1" height="21.0" fill="#fff"/><rect x="254.0" y="810.5" width="1.5" height="21.0" fill="#a0a0a0"/><rect x="218" y="830.0" width="37.5" height="1.5" fill="#a0a0a0"/><rect x="301.5" y="810.5" width="20.0" height="21.0" fill="#f0f0f0"/><rect x="301.5" y="810.5" width="20.0" height="1" fill="#fff"/><rect x="301.5" y="810.5" width="1" height="21.0" fill="#fff"/><rect x="320.0" y="810.5" width="1.5" height="21.0" fill="#a0a0a0"/><rect x="301.5" y="830.0" width="20.0" height="1.5" fill="#a0a0a0"/><path d="M314.5 821.0 L309.5 816.0 V826.0 Z" fill="#a0a0a0"/><rect x="321.5" y="810" width="1.5" height="23" fill="#909090"/><rect x="197" y="831.5" width="126" height="1.5" fill="#909090"/><rect x="326" y="810" width="1551" height="21" fill="#c8c8c8"/><rect x="327.5" y="811" width="18.0" height="19.5" fill="#f0f0f0"/><rect x="327.5" y="811" width="18.0" height="1" fill="#fff"/><rect x="327.5" y="811" width="1" height="19.5" fill="#fff"/><rect x="344.0" y="811" width="1.5" height="19.5" fill="#a0a0a0"/><rect x="327.5" y="829.0" width="18.0" height="1.5" fill="#a0a0a0"/><path d="M333.5 820.75 L338.5 815.75 V825.75 Z" fill="#000"/><rect x="492.5" y="811" width="81.5" height="19.5" fill="#f0f0f0"/><rect x="492.5" y="811" width="81.5" height="1" fill="#fff"/><rect x="492.5" y="811" width="1" height="19.5" fill="#fff"/><rect x="572.5" y="811" width="1.5" height="19.5" fill="#a0a0a0"/><rect x="492.5" y="829.0" width="81.5" height="1.5" fill="#a0a0a0"/><rect x="558.5" y="813" width="1.5" height="16" fill="#f0c000"/><rect x="1859" y="811" width="18" height="19.5" fill="#f0f0f0"/><rect x="1859" y="811" width="18" height="1" fill="#fff"/><rect x="1859" y="811" width="1" height="19.5" fill="#fff"/><rect x="1875.5" y="811" width="1.5" height="19.5" fill="#a0a0a0"/><rect x="1859" y="829.0" width="18" height="1.5" fill="#a0a0a0"/><path d="M1871.0 820.75 L1866.0 815.75 V825.75 Z" fill="#000"/><rect x="326" y="830.5" width="1551" height="1.5" fill="#a0a0a0"/><rect x="0" y="834" width="1877" height="1" fill="#d8d8d8"/></svg>
<svg class="a" style="left:0;top:0" width="330" height="836" viewBox="0 0 330 836"><rect x="40.5" y="242.96" width="1.6" height="509.54" fill="#d4d4d4"/><rect x="41" y="255.78" width="13" height="1.6" fill="#d4d4d4"/><rect x="41" y="277.00" width="13" height="1.6" fill="#d4d4d4"/><rect x="41" y="298.22" width="13" height="1.6" fill="#d4d4d4"/><rect x="41" y="319.44" width="13" height="1.6" fill="#d4d4d4"/><rect x="41" y="340.66" width="13" height="1.6" fill="#d4d4d4"/><rect x="41" y="361.88" width="13" height="1.6" fill="#d4d4d4"/><rect x="41" y="383.10" width="13" height="1.6" fill="#d4d4d4"/><rect x="41" y="404.32" width="13" height="1.6" fill="#d4d4d4"/><rect x="41" y="425.54" width="13" height="1.6" fill="#d4d4d4"/><rect x="41" y="446.76" width="13" height="1.6" fill="#d4d4d4"/><rect x="41" y="467.98" width="13" height="1.6" fill="#d4d4d4"/><rect x="41" y="489.20" width="13" height="1.6" fill="#d4d4d4"/><rect x="41" y="510.42" width="13" height="1.6" fill="#d4d4d4"/><rect x="41" y="531.64" width="13" height="1.6" fill="#d4d4d4"/><rect x="41" y="552.86" width="13" height="1.6" fill="#d4d4d4"/><rect x="41" y="574.08" width="13" height="1.6" fill="#d4d4d4"/><rect x="41" y="595.30" width="13" height="1.6" fill="#d4d4d4"/><rect x="41" y="616.52" width="13" height="1.6" fill="#d4d4d4"/><rect x="41" y="637.74" width="13" height="1.6" fill="#d4d4d4"/><rect x="41" y="658.96" width="13" height="1.6" fill="#d4d4d4"/><rect x="41" y="680.18" width="13" height="1.6" fill="#d4d4d4"/><rect x="41" y="701.40" width="13" height="1.6" fill="#d4d4d4"/><rect x="41" y="722.62" width="13" height="1.6" fill="#d4d4d4"/><rect x="41" y="743.84" width="13" height="1.6" fill="#d4d4d4"/><rect x="25" y="213.04" width="7" height="1.6" fill="#d0d0d0"/><rect x="25" y="234.26" width="7" height="1.6" fill="#d0d0d0"/><polygon points="40.40,160.80 30.90,170.30 35.65,170.30 40.40,165.55" fill="#5ec6f0"/><polygon points="40.40,160.80 49.90,170.30 45.15,170.30 40.40,165.55" fill="#1c92d8"/><polygon points="49.90,170.30 40.40,179.80 40.40,175.05 45.15,170.30" fill="#0b66a4"/><polygon points="30.90,170.30 40.40,179.80 40.40,175.05 35.65,170.30" fill="#1a88c8"/><polygon points="40.40,165.55 45.15,170.30 40.40,175.05 35.65,170.30" fill="#0cbcf0"/><polygon points="38.98,162.23 32.33,168.88 33.75,168.88 38.98,163.65" fill="#a8e6ff"/><polygon points="40.40,182.02 30.90,191.52 35.65,191.52 40.40,186.77" fill="#5ec6f0"/><polygon points="40.40,182.02 49.90,191.52 45.15,191.52 40.40,186.77" fill="#1c92d8"/><polygon points="49.90,191.52 40.40,201.02 40.40,196.27 45.15,191.52" fill="#0b66a4"/><polygon points="30.90,191.52 40.40,201.02 40.40,196.27 35.65,191.52" fill="#1a88c8"/><polygon points="40.40,186.77 45.15,191.52 40.40,196.27 35.65,191.52" fill="#0cbcf0"/><polygon points="38.98,183.45 32.33,190.09 33.75,190.09 38.98,184.87" fill="#a8e6ff"/><polygon points="40.40,203.24 30.90,212.74 35.65,212.74 40.40,207.99" fill="#5ec6f0"/><polygon points="40.40,203.24 49.90,212.74 45.15,212.74 40.40,207.99" fill="#1c92d8"/><polygon points="49.90,212.74 40.40,222.24 40.40,217.49 45.15,212.74" fill="#0b66a4"/><polygon points="30.90,212.74 40.40,222.24 40.40,217.49 35.65,212.74" fill="#1a88c8"/><polygon points="40.40,207.99 45.15,212.74 40.40,217.49 35.65,212.74" fill="#0cbcf0"/><polygon points="38.98,204.67 32.33,211.31 33.75,211.31 38.98,206.09" fill="#a8e6ff"/><polygon points="40.40,224.46 30.90,233.96 35.65,233.96 40.40,229.21" fill="#5ec6f0"/><polygon points="40.40,224.46 49.90,233.96 45.15,233.96 40.40,229.21" fill="#1c92d8"/><polygon points="49.90,233.96 40.40,243.46 40.40,238.71 45.15,233.96" fill="#0b66a4"/><polygon points="30.90,233.96 40.40,243.46 40.40,238.71 35.65,233.96" fill="#1a88c8"/><polygon points="40.40,229.21 45.15,233.96 40.40,238.71 35.65,233.96" fill="#0cbcf0"/><polygon points="38.98,225.89 32.33,232.53 33.75,232.53 38.98,227.31" fill="#a8e6ff"/><polygon points="62.80,245.68 53.30,255.18 58.05,255.18 62.80,250.43" fill="#5ec6f0"/><polygon points="62.80,245.68 72.30,255.18 67.55,255.18 62.80,250.43" fill="#1c92d8"/><polygon points="72.30,255.18 62.80,264.68 62.80,259.93 67.55,255.18" fill="#0b66a4"/><polygon points="53.30,255.18 62.80,264.68 62.80,259.93 58.05,255.18" fill="#1a88c8"/><polygon points="62.80,250.43 67.55,255.18 62.80,259.93 58.05,255.18" fill="#0cbcf0"/><polygon points="61.38,247.11 54.72,253.75 56.15,253.75 61.38,248.53" fill="#a8e6ff"/><polygon points="62.80,266.90 53.30,276.40 58.05,276.40 62.80,271.65" fill="#5ec6f0"/><polygon points="62.80,266.90 72.30,276.40 67.55,276.40 62.80,271.65" fill="#1c92d8"/><polygon points="72.30,276.40 62.80,285.90 62.80,281.15 67.55,276.40" fill="#0b66a4"/><polygon points="53.30,276.40 62.80,285.90 62.80,281.15 58.05,276.40" fill="#1a88c8"/><polygon points="62.80,271.65 67.55,276.40 62.80,281.15 58.05,276.40" fill="#0cbcf0"/><polygon points="61.38,268.32 54.72,274.97 56.15,274.97 61.38,269.75" fill="#a8e6ff"/><polygon points="62.80,288.12 53.30,297.62 58.05,297.62 62.80,292.87" fill="#5ec6f0"/><polygon points="62.80,288.12 72.30,297.62 67.55,297.62 62.80,292.87" fill="#1c92d8"/><polygon points="72.30,297.62 62.80,307.12 62.80,302.37 67.55,297.62" fill="#0b66a4"/><polygon points="53.30,297.62 62.80,307.12 62.80,302.37 58.05,297.62" fill="#1a88c8"/><polygon points="62.80,292.87 67.55,297.62 62.80,302.37 58.05,297.62" fill="#0cbcf0"/><polygon points="61.38,289.55 54.72,296.19 56.15,296.19 61.38,290.97" fill="#a8e6ff"/><polygon points="62.80,309.34 53.30,318.84 58.05,318.84 62.80,314.09" fill="#5ec6f0"/><polygon points="62.80,309.34 72.30,318.84 67.55,318.84 62.80,314.09" fill="#1c92d8"/><polygon points="72.30,318.84 62.80,328.34 62.80,323.59 67.55,318.84" fill="#0b66a4"/><polygon points="53.30,318.84 62.80,328.34 62.80,323.59 58.05,318.84" fill="#1a88c8"/><polygon points="62.80,314.09 67.55,318.84 62.80,323.59 58.05,318.84" fill="#0cbcf0"/><polygon points="61.38,310.77 54.72,317.42 56.15,317.42 61.38,312.19" fill="#a8e6ff"/><polygon points="62.80,330.56 53.30,340.06 58.05,340.06 62.80,335.31" fill="#5ec6f0"/><polygon points="62.80,330.56 72.30,340.06 67.55,340.06 62.80,335.31" fill="#1c92d8"/><polygon points="72.30,340.06 62.80,349.56 62.80,344.81 67.55,340.06" fill="#0b66a4"/><polygon points="53.30,340.06 62.80,349.56 62.80,344.81 58.05,340.06" fill="#1a88c8"/><polygon points="62.80,335.31 67.55,340.06 62.80,344.81 58.05,340.06" fill="#0cbcf0"/><polygon points="61.38,331.99 54.72,338.63 56.15,338.63 61.38,333.41" fill="#a8e6ff"/><polygon points="62.80,351.78 53.30,361.28 58.05,361.28 62.80,356.53" fill="#5ec6f0"/><polygon points="62.80,351.78 72.30,361.28 67.55,361.28 62.80,356.53" fill="#1c92d8"/><polygon points="72.30,361.28 62.80,370.78 62.80,366.03 67.55,361.28" fill="#0b66a4"/><polygon points="53.30,361.28 62.80,370.78 62.80,366.03 58.05,361.28" fill="#1a88c8"/><polygon points="62.80,356.53 67.55,361.28 62.80,366.03 58.05,361.28" fill="#0cbcf0"/><polygon points="61.38,353.20 54.72,359.85 56.15,359.85 61.38,354.63" fill="#a8e6ff"/><polygon points="62.80,373.00 53.30,382.50 58.05,382.50 62.80,377.75" fill="#5ec6f0"/><polygon points="62.80,373.00 72.30,382.50 67.55,382.50 62.80,377.75" fill="#1c92d8"/><polygon points="72.30,382.50 62.80,392.00 62.80,387.25 67.55,382.50" fill="#0b66a4"/><polygon points="53.30,382.50 62.80,392.00 62.80,387.25 58.05,382.50" fill="#1a88c8"/><polygon points="62.80,377.75 67.55,382.50 62.80,387.25 58.05,382.50" fill="#0cbcf0"/><polygon points="61.38,374.43 54.72,381.07 56.15,381.07 61.38,375.85" fill="#a8e6ff"/><polygon points="62.80,394.22 53.30,403.72 58.05,403.72 62.80,398.97" fill="#5ec6f0"/><polygon points="62.80,394.22 72.30,403.72 67.55,403.72 62.80,398.97" fill="#1c92d8"/><polygon points="72.30,403.72 62.80,413.22 62.80,408.47 67.55,403.72" fill="#0b66a4"/><polygon points="53.30,403.72 62.80,413.22 62.80,408.47 58.05,403.72" fill="#1a88c8"/><polygon points="62.80,398.97 67.55,403.72 62.80,408.47 58.05,403.72" fill="#0cbcf0"/><polygon points="61.38,395.65 54.72,402.30 56.15,402.30 61.38,397.07" fill="#a8e6ff"/><polygon points="62.80,415.44 53.30,424.94 58.05,424.94 62.80,420.19" fill="#5ec6f0"/><polygon points="62.80,415.44 72.30,424.94 67.55,424.94 62.80,420.19" fill="#1c92d8"/><polygon points="72.30,424.94 62.80,434.44 62.80,429.69 67.55,424.94" fill="#0b66a4"/><polygon points="53.30,424.94 62.80,434.44 62.80,429.69 58.05,424.94" fill="#1a88c8"/><polygon points="62.80,420.19 67.55,424.94 62.80,429.69 58.05,424.94" fill="#0cbcf0"/><polygon points="61.38,416.87 54.72,423.51 56.15,423.51 61.38,418.29" fill="#a8e6ff"/><polygon points="62.80,436.66 53.30,446.16 58.05,446.16 62.80,441.41" fill="#5ec6f0"/><polygon points="62.80,436.66 72.30,446.16 67.55,446.16 62.80,441.41" fill="#1c92d8"/><polygon points="72.30,446.16 62.80,455.66 62.80,450.91 67.55,446.16" fill="#0b66a4"/><polygon points="53.30,446.16 62.80,455.66 62.80,450.91 58.05,446.16" fill="#1a88c8"/><polygon points="62.80,441.41 67.55,446.16 62.80,450.91 58.05,446.16" fill="#0cbcf0"/><polygon points="61.38,438.09 54.72,444.74 56.15,444.74 61.38,439.51" fill="#a8e6ff"/><polygon points="62.80,457.88 53.30,467.38 58.05,467.38 62.80,462.63" fill="#5ec6f0"/><polygon points="62.80,457.88 72.30,467.38 67.55,467.38 62.80,462.63" fill="#1c92d8"/><polygon points="72.30,467.38 62.80,476.88 62.80,472.13 67.55,467.38" fill="#0b66a4"/><polygon points="53.30,467.38 62.80,476.88 62.80,472.13 58.05,467.38" fill="#1a88c8"/><polygon points="62.80,462.63 67.55,467.38 62.80,472.13 58.05,467.38" fill="#0cbcf0"/><polygon points="61.38,459.31 54.72,465.95 56.15,465.95 61.38,460.73" fill="#a8e6ff"/><polygon points="62.80,479.10 53.30,488.60 58.05,488.60 62.80,483.85" fill="#5ec6f0"/><polygon points="62.80,479.10 72.30,488.60 67.55,488.60 62.80,483.85" fill="#1c92d8"/><polygon points="72.30,488.60 62.80,498.10 62.80,493.35 67.55,488.60" fill="#0b66a4"/><polygon points="53.30,488.60 62.80,498.10 62.80,493.35 58.05,488.60" fill="#1a88c8"/><polygon points="62.80,483.85 67.55,488.60 62.80,493.35 58.05,488.60" fill="#0cbcf0"/><polygon points="61.38,480.52 54.72,487.17 56.15,487.17 61.38,481.95" fill="#a8e6ff"/><polygon points="62.80,500.32 53.30,509.82 58.05,509.82 62.80,505.07" fill="#5ec6f0"/><polygon points="62.80,500.32 72.30,509.82 67.55,509.82 62.80,505.07" fill="#1c92d8"/><polygon points="72.30,509.82 62.80,519.32 62.80,514.57 67.55,509.82" fill="#0b66a4"/><polygon points="53.30,509.82 62.80,519.32 62.80,514.57 58.05,509.82" fill="#1a88c8"/><polygon points="62.80,505.07 67.55,509.82 62.80,514.57 58.05,509.82" fill="#0cbcf0"/><polygon points="61.38,501.75 54.72,508.39 56.15,508.39 61.38,503.17" fill="#a8e6ff"/><polygon points="62.80,521.54 53.30,531.04 58.05,531.04 62.80,526.29" fill="#5ec6f0"/><polygon points="62.80,521.54 72.30,531.04 67.55,531.04 62.80,526.29" fill="#1c92d8"/><polygon points="72.30,531.04 62.80,540.54 62.80,535.79 67.55,531.04" fill="#0b66a4"/><polygon points="53.30,531.04 62.80,540.54 62.80,535.79 58.05,531.04" fill="#1a88c8"/><polygon points="62.80,526.29 67.55,531.04 62.80,535.79 58.05,531.04" fill="#0cbcf0"/><polygon points="61.38,522.96 54.72,529.62 56.15,529.62 61.38,524.39" fill="#a8e6ff"/><polygon points="62.80,542.76 53.30,552.26 58.05,552.26 62.80,547.51" fill="#5ec6f0"/><polygon points="62.80,542.76 72.30,552.26 67.55,552.26 62.80,547.51" fill="#1c92d8"/><polygon points="72.30,552.26 62.80,561.76 62.80,557.01 67.55,552.26" fill="#0b66a4"/><polygon points="53.30,552.26 62.80,561.76 62.80,557.01 58.05,552.26" fill="#1a88c8"/><polygon points="62.80,547.51 67.55,552.26 62.80,557.01 58.05,552.26" fill="#0cbcf0"/><polygon points="61.38,544.18 54.72,550.84 56.15,550.84 61.38,545.61" fill="#a8e6ff"/><polygon points="62.80,563.98 53.30,573.48 58.05,573.48 62.80,568.73" fill="#5ec6f0"/><polygon points="62.80,563.98 72.30,573.48 67.55,573.48 62.80,568.73" fill="#1c92d8"/><polygon points="72.30,573.48 62.80,582.98 62.80,578.23 67.55,573.48" fill="#0b66a4"/><polygon points="53.30,573.48 62.80,582.98 62.80,578.23 58.05,573.48" fill="#1a88c8"/><polygon points="62.80,568.73 67.55,573.48 62.80,578.23 58.05,573.48" fill="#0cbcf0"/><polygon points="61.38,565.40 54.72,572.06 56.15,572.06 61.38,566.83" fill="#a8e6ff"/><polygon points="62.80,585.20 53.30,594.70 58.05,594.70 62.80,589.95" fill="#5ec6f0"/><polygon points="62.80,585.20 72.30,594.70 67.55,594.70 62.80,589.95" fill="#1c92d8"/><polygon points="72.30,594.70 62.80,604.20 62.80,599.45 67.55,594.70" fill="#0b66a4"/><polygon points="53.30,594.70 62.80,604.20 62.80,599.45 58.05,594.70" fill="#1a88c8"/><polygon points="62.80,589.95 67.55,594.70 62.80,599.45 58.05,594.70" fill="#0cbcf0"/><polygon points="61.38,586.62 54.72,593.28 56.15,593.28 61.38,588.05" fill="#a8e6ff"/><polygon points="62.80,606.42 53.30,615.92 58.05,615.92 62.80,611.17" fill="#5ec6f0"/><polygon points="62.80,606.42 72.30,615.92 67.55,615.92 62.80,611.17" fill="#1c92d8"/><polygon points="72.30,615.92 62.80,625.42 62.80,620.67 67.55,615.92" fill="#0b66a4"/><polygon points="53.30,615.92 62.80,625.42 62.80,620.67 58.05,615.92" fill="#1a88c8"/><polygon points="62.80,611.17 67.55,615.92 62.80,620.67 58.05,615.92" fill="#0cbcf0"/><polygon points="61.38,607.85 54.72,614.50 56.15,614.50 61.38,609.27" fill="#a8e6ff"/><polygon points="62.80,627.64 53.30,637.14 58.05,637.14 62.80,632.39" fill="#5ec6f0"/><polygon points="62.80,627.64 72.30,637.14 67.55,637.14 62.80,632.39" fill="#1c92d8"/><polygon points="72.30,637.14 62.80,646.64 62.80,641.89 67.55,637.14" fill="#0b66a4"/><polygon points="53.30,637.14 62.80,646.64 62.80,641.89 58.05,637.14" fill="#1a88c8"/><polygon points="62.80,632.39 67.55,637.14 62.80,641.89 58.05,637.14" fill="#0cbcf0"/><polygon points="61.38,629.06 54.72,635.72 56.15,635.72 61.38,630.49" fill="#a8e6ff"/><polygon points="62.80,648.86 53.30,658.36 58.05,658.36 62.80,653.61" fill="#5ec6f0"/><polygon points="62.80,648.86 72.30,658.36 67.55,658.36 62.80,653.61" fill="#1c92d8"/><polygon points="72.30,658.36 62.80,667.86 62.80,663.11 67.55,658.36" fill="#0b66a4"/><polygon points="53.30,658.36 62.80,667.86 62.80,663.11 58.05,658.36" fill="#1a88c8"/><polygon points="62.80,653.61 67.55,658.36 62.80,663.11 58.05,658.36" fill="#0cbcf0"/><polygon points="61.38,650.28 54.72,656.93 56.15,656.93 61.38,651.71" fill="#a8e6ff"/><polygon points="62.80,670.08 53.30,679.58 58.05,679.58 62.80,674.83" fill="#5ec6f0"/><polygon points="62.80,670.08 72.30,679.58 67.55,679.58 62.80,674.83" fill="#1c92d8"/><polygon points="72.30,679.58 62.80,689.08 62.80,684.33 67.55,679.58" fill="#0b66a4"/><polygon points="53.30,679.58 62.80,689.08 62.80,684.33 58.05,679.58" fill="#1a88c8"/><polygon points="62.80,674.83 67.55,679.58 62.80,684.33 58.05,679.58" fill="#0cbcf0"/><polygon points="61.38,671.50 54.72,678.15 56.15,678.15 61.38,672.93" fill="#a8e6ff"/><polygon points="62.80,691.30 53.30,700.80 58.05,700.80 62.80,696.05" fill="#5ec6f0"/><polygon points="62.80,691.30 72.30,700.80 67.55,700.80 62.80,696.05" fill="#1c92d8"/><polygon points="72.30,700.80 62.80,710.30 62.80,705.55 67.55,700.80" fill="#0b66a4"/><polygon points="53.30,700.80 62.80,710.30 62.80,705.55 58.05,700.80" fill="#1a88c8"/><polygon points="62.80,696.05 67.55,700.80 62.80,705.55 58.05,700.80" fill="#0cbcf0"/><polygon points="61.38,692.72 54.72,699.38 56.15,699.38 61.38,694.15" fill="#a8e6ff"/><polygon points="62.80,712.52 53.30,722.02 58.05,722.02 62.80,717.27" fill="#5ec6f0"/><polygon points="62.80,712.52 72.30,722.02 67.55,722.02 62.80,717.27" fill="#1c92d8"/><polygon points="72.30,722.02 62.80,731.52 62.80,726.77 67.55,722.02" fill="#0b66a4"/><polygon points="53.30,722.02 62.80,731.52 62.80,726.77 58.05,722.02" fill="#1a88c8"/><polygon points="62.80,717.27 67.55,722.02 62.80,726.77 58.05,722.02" fill="#0cbcf0"/><polygon points="61.38,713.94 54.72,720.60 56.15,720.60 61.38,715.37" fill="#a8e6ff"/><polygon points="62.80,733.74 53.30,743.24 58.05,743.24 62.80,738.49" fill="#5ec6f0"/><polygon points="62.80,733.74 72.30,743.24 67.55,743.24 62.80,738.49" fill="#1c92d8"/><polygon points="72.30,743.24 62.80,752.74 62.80,747.99 67.55,743.24" fill="#0b66a4"/><polygon points="53.30,743.24 62.80,752.74 62.80,747.99 58.05,743.24" fill="#1a88c8"/><polygon points="62.80,738.49 67.55,743.24 62.80,747.99 58.05,743.24" fill="#0cbcf0"/><polygon points="61.38,735.16 54.72,741.82 56.15,741.82 61.38,736.59" fill="#a8e6ff"/><defs><linearGradient id="eb" x1="0" y1="0" x2="0" y2="1"><stop offset="0" stop-color="#ffffff"/><stop offset="0.5" stop-color="#f4f6fc"/><stop offset="1" stop-color="#c8cce6"/></linearGradient></defs><rect x="13.0" y="208.0" width="12" height="12" rx="2" fill="url(#eb)" stroke="#9aa0b8" stroke-width="1"/><rect x="16.0" y="213.3" width="6" height="1.6" fill="#000"/><rect x="18.2" y="211.0" width="1.6" height="6" fill="#000"/><defs><linearGradient id="eb" x1="0" y1="0" x2="0" y2="1"><stop offset="0" stop-color="#ffffff"/><stop offset="0.5" stop-color="#f4f6fc"/><stop offset="1" stop-color="#c8cce6"/></linearGradient></defs><rect x="13.0" y="229.0" width="12" height="12" rx="2" fill="url(#eb)" stroke="#9aa0b8" stroke-width="1"/><rect x="16.0" y="234.3" width="6" height="1.6" fill="#000"/><path d="M13 132 L19 138 L13 144 L7 138 Z" fill="#c040e0"/><rect x="15" y="140" width="12" height="10" fill="#20a040"/><circle cx="18" cy="140" r="4.5" fill="#20d8f0"/><path d="M13 138 L20 145 L13 152 L6 145 Z" fill="#1050f0"/><path d="M31 142 h6 l-3 3.5 z" fill="#000"/><path d="M7 775 L11 765 L14 771 L17 765 L19 774" stroke="#c8c8c8" stroke-width="2" fill="none"/><path d="M7 774 H19" stroke="#5090e0" stroke-width="1.5"/><path d="M7 774 l3 -2 v4 z M19 774 l-3 -2 v4 z" fill="#5090e0"/><rect x="21.5" y="764.5" width="13.5" height="12" fill="#e8eef8" stroke="#5a8ad0"/><rect x="21.5" y="764.5" width="13.5" height="2.5" fill="#70a0e0"/><rect x="23" y="769" width="5" height="1.3" fill="#90a0c0"/><rect x="23" y="772" width="5" height="1.3" fill="#90a0c0"/><path d="M25 778 L31 772" stroke="#6a9ae0" stroke-width="3" stroke-linecap="round"/><circle cx="43.5" cy="770.5" r="6.5" fill="#4cb04c"/><circle cx="43.5" cy="770.5" r="5" fill="#6cc86c"/><path d="M43.5 766.5 L47.5 770.5 L43.5 774.5 L39.5 770.5 Z" fill="#fff"/><path d="M13 792 V790 Q13 787 17 787 Q21 787 21 790 V792" stroke="#a8a8a8" stroke-width="1.8" fill="none"/><rect x="11" y="792" width="12.5" height="10.5" fill="#f0c040"/><rect x="11" y="801" width="12.5" height="1.5" fill="#e09020"/><rect x="16.5" y="795" width="1.6" height="4" fill="#c09020"/><path d="M28 800 L36 792" stroke="#6a9ae0" stroke-width="3.5" stroke-linecap="round"/><path d="M35 793 Q34 788 38 787 L37 790 L39 791 L40 789 Q41 793 37 794" fill="#d8d8d8"/><circle cx="48.5" cy="794.5" r="6.5" fill="#e05050"/><circle cx="48.5" cy="794" r="5.2" fill="#f07070"/><rect x="45" y="793" width="7" height="2.5" fill="#fff"/></svg>
<svg class="a" style="left:0;top:23px" width="16" height="24" viewBox="0 0 16 24"><rect x="0" y="2" width="14.5" height="19.5" fill="#30353c"/><rect x="0" y="2" width="12.8" height="18" fill="#e8e8e8"/><rect x="0" y="2.5" width="12.5" height="5" fill="#ffffff"/><rect x="0" y="9" width="12" height="10.5" fill="#000"/><path d="M0 11.5 H4 M4 13 H7 V11 H12 M0 16 H5 V19" stroke="#20a040" stroke-width="1.5" fill="none"/><path d="M3 9 V19.5" stroke="#30d8d0" stroke-width="1.5"/><rect x="6" y="17" width="6" height="1.8" fill="#5020f0"/></svg><svg class="a" style="left:1848px;top:23px" width="29" height="23" viewBox="0 0 29 23"><rect x="1" y="6.5" width="2" height="4.5" fill="#1a2028"/><rect x="1" y="12.5" width="2" height="4.5" fill="#1a2028"/><rect x="8" y="4" width="12" height="14" fill="#606a78"/><rect x="8" y="4" width="11" height="13" fill="#f2f2f2"/><path d="M13.5 5.5 L15.5 8 M13.5 5.5 L11.5 8 M13.5 15.5 L15.5 13 M13.5 15.5 L11.5 13 M9.5 10.5 H17.5 M13.5 6 V15" stroke="#303030" stroke-width="1" stroke-dasharray="1.2 0.8"/><rect x="25" y="4" width="5" height="14" fill="#606a78"/><rect x="25" y="4" width="5" height="13" fill="#f2f2f2"/><rect x="26" y="8" width="3" height="6" fill="#000"/></svg>
</body></html>
